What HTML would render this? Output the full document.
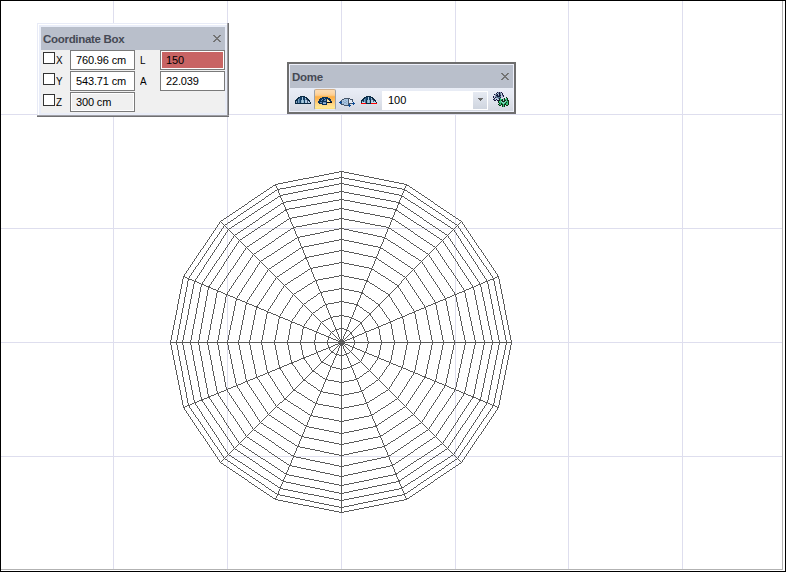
<!DOCTYPE html>
<html><head><meta charset="utf-8"><title>Dome</title>
<style>
html,body{margin:0;padding:0;}
body{width:786px;height:572px;position:relative;overflow:hidden;background:#fff;font-family:"Liberation Sans",sans-serif;font-size:11px;color:#000;}
#frame{position:absolute;left:0;top:0;width:784px;height:570px;border:1px solid #000;}
.g{position:absolute;background:#dedeee;}
.gl{position:absolute;background:#b2b2b2;}
svg{position:absolute;left:0;top:0;}
/* coordinate box */
#cb{position:absolute;left:37px;top:23px;width:192px;height:94px;background:#e8ebf7;}
#cb .b1{position:absolute;left:1px;top:1px;width:189px;height:91px;background:#fff;}
#cb .b2{position:absolute;left:2px;top:2px;width:188px;height:90px;background:#e9edf8;}
#cb .dr{position:absolute;left:190px;top:0;width:2px;height:94px;background:linear-gradient(90deg,#b6b6bd,#585858);}
#cb .db{position:absolute;left:0;top:92px;width:192px;height:2px;background:linear-gradient(180deg,#b6b6bd,#585858);}
#cb .tt{position:absolute;left:4px;top:4px;width:184px;height:23px;background:#b9bfcb;}
#cb .ct{position:absolute;left:4px;top:27px;width:184px;height:63px;background:#f0f0f0;}
.title{position:absolute;font-weight:bold;font-size:11.5px;letter-spacing:-0.3px;color:#454954;white-space:nowrap;line-height:14px;}
.cbx{position:absolute;width:10px;height:10px;border:1px solid #333;background:#fff;}
.lb{position:absolute;white-space:nowrap;line-height:13px;transform:scaleX(0.9);transform-origin:0 0;}
.fd{position:absolute;width:63px;height:18px;border:1px solid #7a7a7a;background:#fff;}
.fd i{position:absolute;left:0;top:0;width:61px;height:16px;border:1px solid #fff;display:block;}
.fd span{position:absolute;left:5px;top:3px;line-height:13px;white-space:nowrap;font-style:normal;letter-spacing:-0.15px;}
/* dome toolbar */
#dm{position:absolute;left:287px;top:62px;width:229px;height:52px;background:#6e6e6e;}
#dm .in{position:absolute;left:2px;top:2px;width:225px;height:48px;background:#eef0fb;}
#dm .tt{position:absolute;left:3px;top:3px;width:223px;height:23px;background:#b9bfcb;}
#dm .tb{position:absolute;left:3px;top:26px;width:223px;height:23px;background:linear-gradient(180deg,#eaeef7 0%,#e2e6ef 45%,#d3d7e0 100%);}
#act{position:absolute;left:27px;top:27px;width:20px;height:19px;border:1px solid #9aa0a8;border-top-color:#d2b08c;border-bottom-color:#e6e8ee;border-radius:2px;background:linear-gradient(180deg,#fcdcb2 0%,#fdd6a4 16%,#fdcc8c 28%,#fdb855 33%,#fdb14a 39%,#fdb958 50%,#fec56c 61%,#ffd987 76%,#ffe793 92%,#ffdd70 100%);}
#combo{position:absolute;left:95px;top:29px;width:106px;height:19px;background:#fff;}
#combo span{position:absolute;left:6px;top:3px;line-height:13px;}
#combo .btn{position:absolute;left:91px;top:1px;width:14px;height:17px;background:linear-gradient(180deg,#e6eaf2,#cfd5df);}
#combo .arr{position:absolute;left:5px;top:6px;width:0;height:0;border-left:3px solid transparent;border-right:3px solid transparent;border-top:3px solid #6a6a6a;}
</style></head><body>
<div id="frame"></div>
<div class="g" style="left:113px;top:1px;width:1px;height:568px"></div><div class="g" style="left:227px;top:1px;width:1px;height:568px"></div><div class="g" style="left:341px;top:1px;width:1px;height:568px"></div><div class="g" style="left:455px;top:1px;width:1px;height:568px"></div><div class="g" style="left:568px;top:1px;width:1px;height:568px"></div><div class="g" style="left:682px;top:1px;width:1px;height:568px"></div><div class="g" style="left:1px;top:114px;width:781px;height:1px"></div><div class="g" style="left:1px;top:228px;width:781px;height:1px"></div><div class="g" style="left:1px;top:342px;width:781px;height:1px"></div><div class="g" style="left:1px;top:456px;width:781px;height:1px"></div>
<div class="gl" style="left:782px;top:1px;width:1px;height:569px"></div>
<div class="gl" style="left:1px;top:569px;width:782px;height:1px"></div>
<svg width="786" height="572" viewBox="0 0 786 572" shape-rendering="crispEdges"><path d="M339 171.5h5M334 172.5h5M344 172.5h5M329 173.5h5M349 173.5h5M324 174.5h5M354 174.5h5M319 175.5h5M359 175.5h5M314 176.5h5M364 176.5h5M309 177.5h5M339 177.5h5M369 177.5h5M303 178.5h6M334 178.5h5M344 178.5h5M374 178.5h5M298 179.5h5M328 179.5h6M349 179.5h6M379 179.5h5M293 180.5h5M323 180.5h5M355 180.5h5M384 180.5h5M288 181.5h5M318 181.5h5M360 181.5h5M389 181.5h5M283 182.5h5M312 182.5h6M365 182.5h5M394 182.5h5M278 183.5h5M307 183.5h5M339 183.5h5M370 183.5h6M399 183.5h5M275 184.5h3M302 184.5h5M334 184.5h5M344 184.5h5M376 184.5h5M404 184.5h3M273 185.5h3M296 185.5h6M329 185.5h5M349 185.5h5M381 185.5h5M406 185.5h3M291 186.5h5M324 186.5h5M354 186.5h5M386 186.5h5M270 187.5h2M286 187.5h5M319 187.5h5M359 187.5h5M391 187.5h6M410 187.5h2M280 188.5h6M314 188.5h5M364 188.5h5M397 188.5h5M267 189.5h2M277 189.5h3M308 189.5h6M369 189.5h5M402 189.5h3M413 189.5h2M275 190.5h2M303 190.5h5M374 190.5h5M404 190.5h3M264 191.5h2M298 191.5h5M339 191.5h5M379 191.5h5M416 191.5h2M272 192.5h2M293 192.5h5M334 192.5h5M344 192.5h5M384 192.5h5M408 192.5h2M261 193.5h2M288 193.5h5M328 193.5h6M349 193.5h5M389 193.5h5M419 193.5h2M269 194.5h2M283 194.5h5M323 194.5h5M354 194.5h6M394 194.5h5M411 194.5h2M258 195.5h2M280 195.5h3M318 195.5h5M360 195.5h5M399 195.5h3M422 195.5h2M266 196.5h2M278 196.5h3M313 196.5h5M365 196.5h5M401 196.5h3M414 196.5h2M255 197.5h2M307 197.5h6M370 197.5h5M425 197.5h2M275 198.5h2M302 198.5h5M375 198.5h5M405 198.5h2M252 199.5h2M262 199.5h2M297 199.5h5M339 199.5h5M380 199.5h6M418 199.5h2M428 199.5h2M272 200.5h2M291 200.5h6M333 200.5h6M344 200.5h6M386 200.5h5M408 200.5h2M249 201.5h2M259 201.5h2M286 201.5h5M328 201.5h5M350 201.5h5M391 201.5h5M421 201.5h2M431 201.5h2M269 202.5h2M283 202.5h3M322 202.5h6M355 202.5h5M396 202.5h4M411 202.5h2M256 203.5h2M281 203.5h3M317 203.5h5M360 203.5h6M398 203.5h3M413 203.5h2M424 203.5h2M245 204.5h2M266 204.5h2M311 204.5h6M366 204.5h5M435 204.5h2M253 205.5h2M264 205.5h2M278 205.5h2M306 205.5h5M371 205.5h6M402 205.5h2M416 205.5h2M427 205.5h2M242 206.5h2M300 206.5h6M377 206.5h5M438 206.5h2M250 207.5h2M261 207.5h2M275 207.5h2M295 207.5h5M382 207.5h5M405 207.5h2M419 207.5h2M430 207.5h2M239 208.5h2M289 208.5h6M339 208.5h5M387 208.5h6M441 208.5h2M247 209.5h2M258 209.5h2M272 209.5h2M285 209.5h4M334 209.5h5M344 209.5h5M393 209.5h4M408 209.5h2M422 209.5h2M433 209.5h2M236 210.5h2M284 210.5h3M329 210.5h5M349 210.5h5M395 210.5h3M444 210.5h2M244 211.5h2M255 211.5h2M269 211.5h2M323 211.5h6M354 211.5h5M411 211.5h2M425 211.5h2M436 211.5h2M233 212.5h2M281 212.5h2M318 212.5h5M359 212.5h5M399 212.5h2M447 212.5h2M241 213.5h2M252 213.5h2M266 213.5h2M313 213.5h5M364 213.5h6M414 213.5h2M428 213.5h2M439 213.5h2M230 214.5h2M278 214.5h2M308 214.5h5M370 214.5h5M402 214.5h2M450 214.5h2M238 215.5h2M249 215.5h2M263 215.5h2M303 215.5h5M375 215.5h5M417 215.5h2M431 215.5h2M442 215.5h2M227 216.5h2M275 216.5h2M297 216.5h6M380 216.5h5M405 216.5h2M453 216.5h2M246 217.5h2M260 217.5h2M292 217.5h5M385 217.5h5M420 217.5h2M434 217.5h2M224 218.5h2M234 218.5h2M272 218.5h2M289 218.5h3M339 218.5h5M390 218.5h3M408 218.5h2M446 218.5h2M456 218.5h2M243 219.5h2M287 219.5h2M334 219.5h5M344 219.5h5M392 219.5h3M437 219.5h2M221 220.5h2M231 220.5h2M256 220.5h2M269 220.5h2M328 220.5h6M349 220.5h6M411 220.5h2M424 220.5h2M439 220.5h2M449 220.5h2M459 220.5h2M240 221.5h2M284 221.5h2M323 221.5h5M355 221.5h5M396 221.5h2M228 222.5h2M238 222.5h2M253 222.5h2M266 222.5h2M318 222.5h5M360 222.5h5M414 222.5h2M427 222.5h2M442 222.5h2M452 222.5h2M281 223.5h2M312 223.5h6M365 223.5h5M399 223.5h2M225 224.5h2M235 224.5h2M250 224.5h2M263 224.5h2M307 224.5h5M370 224.5h5M417 224.5h2M430 224.5h2M445 224.5h2M455 224.5h2M261 225.5h2M278 225.5h2M302 225.5h5M375 225.5h6M402 225.5h2M419 225.5h2M232 226.5h2M247 226.5h2M296 226.5h6M381 226.5h5M433 226.5h2M448 226.5h2M258 227.5h2M275 227.5h2M293 227.5h3M386 227.5h3M405 227.5h2M422 227.5h2M229 228.5h2M244 228.5h2M291 228.5h3M339 228.5h5M388 228.5h3M436 228.5h2M451 228.5h2M255 229.5h2M272 229.5h2M334 229.5h5M344 229.5h5M408 229.5h2M425 229.5h2M241 230.5h2M288 230.5h2M329 230.5h5M349 230.5h4M392 230.5h2M439 230.5h2M252 231.5h2M269 231.5h2M324 231.5h5M353 231.5h5M411 231.5h2M428 231.5h2M238 232.5h2M285 232.5h2M320 232.5h4M358 232.5h5M395 232.5h2M442 232.5h2M249 233.5h2M315 233.5h5M363 233.5h5M431 233.5h2M235 234.5h2M265 234.5h2M282 234.5h2M310 234.5h5M368 234.5h5M398 234.5h2M415 234.5h2M445 234.5h2M246 235.5h2M305 235.5h5M373 235.5h4M434 235.5h2M262 236.5h2M279 236.5h2M300 236.5h5M377 236.5h5M401 236.5h2M418 236.5h2M243 237.5h2M297 237.5h3M382 237.5h3M437 237.5h2M259 238.5h2M276 238.5h2M295 238.5h2M384 238.5h3M404 238.5h2M421 238.5h2M240 239.5h2M339 239.5h5M440 239.5h2M256 240.5h2M292 240.5h2M334 240.5h5M344 240.5h5M388 240.5h2M407 240.5h2M424 240.5h2M272 241.5h2M329 241.5h5M349 241.5h5M253 242.5h2M289 242.5h2M324 242.5h5M354 242.5h5M391 242.5h2M427 242.5h2M269 243.5h2M287 243.5h2M319 243.5h5M359 243.5h4M393 243.5h2M411 243.5h2M250 244.5h2M314 244.5h5M363 244.5h5M430 244.5h2M266 245.5h2M284 245.5h2M309 245.5h5M368 245.5h5M396 245.5h2M414 245.5h2M247 246.5h2M304 246.5h5M373 246.5h5M433 246.5h2M263 247.5h2M281 247.5h2M301 247.5h3M378 247.5h3M399 247.5h2M417 247.5h2M299 248.5h2M380 248.5h3M260 249.5h2M278 249.5h2M402 249.5h2M420 249.5h2M296 250.5h2M339 250.5h5M384 250.5h2M257 251.5h2M275 251.5h2M334 251.5h5M344 251.5h5M405 251.5h2M423 251.5h2M293 252.5h2M329 252.5h5M349 252.5h5M387 252.5h2M254 253.5h2M272 253.5h2M324 253.5h5M354 253.5h5M408 253.5h2M426 253.5h2M290 254.5h2M319 254.5h5M359 254.5h4M390 254.5h2M269 255.5h2M314 255.5h5M363 255.5h5M411 255.5h2M267 256.5h2M287 256.5h2M309 256.5h5M368 256.5h5M393 256.5h2M413 256.5h2M305 257.5h4M373 257.5h4M264 258.5h2M284 258.5h2M304 258.5h3M376 258.5h2M396 258.5h2M416 258.5h2M261 260.5h2M281 260.5h2M301 260.5h2M379 260.5h2M399 260.5h2M419 260.5h2M278 262.5h2M298 262.5h2M339 262.5h5M382 262.5h2M402 262.5h2M334 263.5h5M344 263.5h5M275 264.5h2M295 264.5h2M329 264.5h5M349 264.5h5M385 264.5h2M405 264.5h2M323 265.5h6M354 265.5h5M272 266.5h2M292 266.5h2M318 266.5h5M359 266.5h5M388 266.5h2M408 266.5h2M313 267.5h5M364 267.5h5M269 268.5h2M289 268.5h2M310 268.5h3M369 268.5h3M391 268.5h2M411 268.5h2M308 269.5h2M371 269.5h3M286 270.5h2M394 270.5h2M305 271.5h2M375 271.5h2M283 272.5h2M397 272.5h2M302 273.5h2M378 273.5h2M280 274.5h2M400 274.5h2M299 275.5h2M339 275.5h5M381 275.5h2M183 276.5h2M277 276.5h2M334 276.5h5M344 276.5h5M383 276.5h2M403 276.5h2M497 276.5h2M185 277.5h2M296 277.5h2M329 277.5h5M349 277.5h5M495 277.5h2M187 278.5h2M294 278.5h2M323 278.5h6M354 278.5h5M386 278.5h2M493 278.5h2M188 279.5h4M318 279.5h5M359 279.5h5M490 279.5h4M192 280.5h2M291 280.5h2M315 280.5h3M364 280.5h4M389 280.5h2M488 280.5h2M194 281.5h3M313 281.5h2M366 281.5h3M485 281.5h3M197 282.5h2M288 282.5h2M392 282.5h2M483 282.5h2M199 283.5h2M310 283.5h2M370 283.5h2M481 283.5h2M201 284.5h3M285 284.5h2M308 284.5h2M372 284.5h2M395 284.5h2M478 284.5h3M204 285.5h2M397 285.5h2M476 285.5h2M206 286.5h4M305 286.5h2M375 286.5h2M397 286.5h2M474 286.5h2M208 287.5h3M471 287.5h3M211 288.5h2M302 288.5h2M339 288.5h5M378 288.5h2M469 288.5h2M213 289.5h3M334 289.5h5M344 289.5h5M466 289.5h3M216 290.5h2M299 290.5h2M328 290.5h6M349 290.5h5M381 290.5h2M464 290.5h2M217 291.5h4M297 291.5h2M323 291.5h5M354 291.5h5M383 291.5h2M462 291.5h3M221 292.5h2M320 292.5h3M359 292.5h4M459 292.5h3M223 293.5h2M294 293.5h2M318 293.5h2M361 293.5h3M386 293.5h2M457 293.5h2M225 294.5h3M388 294.5h2M454 294.5h3M228 295.5h2M388 295.5h2M452 295.5h2M230 296.5h3M314 296.5h2M366 296.5h2M450 296.5h2M233 297.5h2M447 297.5h3M235 298.5h2M311 298.5h2M369 298.5h2M445 298.5h2M236 299.5h4M443 299.5h3M240 300.5h2M308 300.5h2M372 300.5h2M440 300.5h3M242 301.5h3M339 301.5h5M438 301.5h2M245 302.5h2M334 302.5h5M344 302.5h5M435 302.5h3M246 303.5h3M304 303.5h2M328 303.5h6M349 303.5h5M376 303.5h2M433 303.5h3M249 304.5h3M325 304.5h3M354 304.5h4M378 304.5h2M431 304.5h2M252 305.5h2M323 305.5h2M356 305.5h3M378 305.5h2M428 305.5h3M254 306.5h4M426 306.5h2M256 307.5h3M320 307.5h2M360 307.5h2M424 307.5h2M259 308.5h2M421 308.5h3M261 309.5h3M419 309.5h2M264 310.5h2M316 310.5h2M364 310.5h2M416 310.5h3M266 311.5h2M414 311.5h2M267 312.5h4M313 312.5h2M367 312.5h2M412 312.5h3M271 313.5h2M369 313.5h2M409 313.5h3M273 314.5h3M369 314.5h2M407 314.5h2M276 315.5h2M339 315.5h5M405 315.5h2M278 316.5h2M333 316.5h6M344 316.5h5M402 316.5h3M279 317.5h4M330 317.5h3M349 317.5h3M400 317.5h3M283 318.5h2M328 318.5h2M351 318.5h3M397 318.5h3M285 319.5h3M326 319.5h2M354 319.5h2M395 319.5h2M288 320.5h2M324 320.5h2M356 320.5h2M393 320.5h2M290 321.5h2M322 321.5h2M358 321.5h2M390 321.5h3M291 322.5h4M360 322.5h2M388 322.5h3M295 323.5h2M360 323.5h2M386 323.5h2M297 324.5h3M383 324.5h3M300 325.5h2M381 325.5h2M302 326.5h2M378 326.5h3M303 327.5h4M376 327.5h3M307 328.5h2M339 328.5h5M374 328.5h2M309 329.5h3M335 329.5h4M344 329.5h3M371 329.5h3M312 330.5h2M346 330.5h3M369 330.5h2M314 331.5h3M332 331.5h2M365 331.5h4M316 332.5h3M350 332.5h2M364 332.5h2M319 333.5h2M350 333.5h2M362 333.5h2M321 334.5h3M359 334.5h3M324 335.5h2M357 335.5h2M326 336.5h3M355 336.5h2M328 337.5h3M352 337.5h3M331 338.5h2M350 338.5h2M333 339.5h3M340 339.5h3M347 339.5h3M336 340.5h2M339 340.5h5M345 340.5h2M338 341.5h7M170 342.5h342M338 343.5h7M335 344.5h3M339 344.5h5M345 344.5h3M333 345.5h2M340 345.5h3M348 345.5h2M331 346.5h2M350 346.5h2M328 347.5h3M352 347.5h3M326 348.5h2M355 348.5h2M323 349.5h3M357 349.5h3M321 350.5h2M360 350.5h2M318 351.5h3M331 351.5h2M362 351.5h2M316 352.5h2M331 352.5h3M364 352.5h3M314 353.5h2M346 353.5h3M367 353.5h2M311 354.5h3M335 354.5h4M344 354.5h3M369 354.5h3M309 355.5h2M339 355.5h5M372 355.5h2M306 356.5h3M374 356.5h3M303 357.5h3M377 357.5h2M301 358.5h4M379 358.5h2M299 359.5h2M381 359.5h3M297 360.5h2M384 360.5h2M294 361.5h3M321 361.5h2M386 361.5h3M291 362.5h3M321 362.5h3M358 362.5h2M389 362.5h2M289 363.5h4M324 363.5h2M356 363.5h2M391 363.5h2M287 364.5h2M326 364.5h2M354 364.5h2M393 364.5h3M284 365.5h3M328 365.5h2M351 365.5h3M396 365.5h2M282 366.5h2M330 366.5h2M350 366.5h2M398 366.5h3M279 367.5h3M332 367.5h4M347 367.5h3M401 367.5h2M277 368.5h4M336 368.5h4M343 368.5h4M403 368.5h3M275 369.5h2M340 369.5h3M406 369.5h2M272 370.5h3M312 370.5h2M408 370.5h2M270 371.5h2M312 371.5h3M367 371.5h2M410 371.5h3M267 372.5h3M413 372.5h2M265 373.5h2M316 373.5h2M364 373.5h2M415 373.5h3M263 374.5h2M418 374.5h2M260 375.5h3M420 375.5h2M258 376.5h2M320 376.5h2M360 376.5h2M422 376.5h4M255 377.5h3M424 377.5h3M253 378.5h2M323 378.5h2M356 378.5h3M427 378.5h3M250 379.5h3M303 379.5h2M325 379.5h3M354 379.5h3M430 379.5h2M248 380.5h2M303 380.5h3M328 380.5h6M349 380.5h5M376 380.5h2M432 380.5h2M245 381.5h3M334 381.5h5M344 381.5h5M434 381.5h3M243 382.5h2M339 382.5h5M437 382.5h2M241 383.5h2M308 383.5h2M372 383.5h2M439 383.5h3M238 384.5h3M442 384.5h2M236 385.5h2M311 385.5h2M369 385.5h2M444 385.5h3M233 386.5h3M447 386.5h2M231 387.5h2M314 387.5h2M366 387.5h2M449 387.5h2M228 388.5h3M451 388.5h3M226 389.5h2M293 389.5h2M454 389.5h2M224 390.5h2M293 390.5h3M318 390.5h2M361 390.5h3M386 390.5h2M456 390.5h3M221 391.5h3M320 391.5h3M359 391.5h3M459 391.5h2M219 392.5h2M297 392.5h2M323 392.5h5M354 392.5h5M383 392.5h2M461 392.5h2M216 393.5h3M299 393.5h2M328 393.5h6M349 393.5h5M381 393.5h2M463 393.5h3M214 394.5h2M334 394.5h5M344 394.5h5M466 394.5h2M211 395.5h3M302 395.5h2M339 395.5h5M378 395.5h2M468 395.5h3M208 396.5h3M471 396.5h3M207 397.5h3M305 397.5h2M375 397.5h2M472 397.5h4M204 398.5h3M284 398.5h2M476 398.5h2M201 399.5h3M284 399.5h3M308 399.5h2M372 399.5h2M395 399.5h2M478 399.5h3M199 400.5h4M310 400.5h2M370 400.5h2M479 400.5h4M197 401.5h2M288 401.5h2M392 401.5h2M483 401.5h2M194 402.5h3M280 402.5h2M313 402.5h2M366 402.5h3M485 402.5h3M192 403.5h2M291 403.5h2M315 403.5h3M364 403.5h3M389 403.5h2M488 403.5h2M190 404.5h2M318 404.5h5M359 404.5h5M490 404.5h2M187 405.5h3M294 405.5h2M323 405.5h6M354 405.5h5M386 405.5h2M492 405.5h3M185 406.5h2M296 406.5h2M329 406.5h5M349 406.5h5M495 406.5h2M183 407.5h2M277 407.5h2M334 407.5h5M344 407.5h5M383 407.5h2M403 407.5h2M497 407.5h2M299 408.5h2M339 408.5h5M381 408.5h2M280 409.5h2M400 409.5h2M302 410.5h2M378 410.5h2M283 411.5h2M397 411.5h2M305 412.5h2M375 412.5h2M286 413.5h2M394 413.5h2M308 414.5h2M371 414.5h3M269 415.5h2M289 415.5h2M310 415.5h3M369 415.5h3M391 415.5h2M411 415.5h2M313 416.5h5M364 416.5h5M272 417.5h2M292 417.5h2M318 417.5h5M359 417.5h5M388 417.5h2M408 417.5h2M323 418.5h6M354 418.5h5M275 419.5h2M295 419.5h2M329 419.5h5M349 419.5h5M385 419.5h2M405 419.5h2M334 420.5h5M344 420.5h5M278 421.5h2M298 421.5h2M339 421.5h5M382 421.5h2M402 421.5h2M261 423.5h2M281 423.5h2M301 423.5h2M379 423.5h2M399 423.5h2M419 423.5h2M264 425.5h2M284 425.5h2M304 425.5h3M375 425.5h3M396 425.5h2M416 425.5h2M306 426.5h3M373 426.5h4M267 427.5h2M287 427.5h2M309 427.5h5M368 427.5h5M393 427.5h2M413 427.5h2M269 428.5h2M314 428.5h5M363 428.5h5M411 428.5h2M290 429.5h2M319 429.5h5M359 429.5h4M390 429.5h2M254 430.5h2M272 430.5h2M324 430.5h5M354 430.5h5M408 430.5h2M426 430.5h2M293 431.5h2M329 431.5h5M349 431.5h5M387 431.5h2M257 432.5h2M275 432.5h2M334 432.5h5M344 432.5h5M405 432.5h2M423 432.5h2M296 433.5h2M339 433.5h5M384 433.5h2M260 434.5h2M278 434.5h2M402 434.5h2M420 434.5h2M299 435.5h2M380 435.5h3M263 436.5h2M281 436.5h2M301 436.5h3M378 436.5h3M399 436.5h2M417 436.5h2M247 437.5h2M304 437.5h5M373 437.5h5M433 437.5h2M266 438.5h2M284 438.5h2M309 438.5h5M368 438.5h5M396 438.5h2M414 438.5h2M250 439.5h2M314 439.5h5M363 439.5h5M430 439.5h2M269 440.5h2M287 440.5h2M319 440.5h5M359 440.5h4M393 440.5h2M411 440.5h2M253 441.5h2M289 441.5h2M324 441.5h5M354 441.5h5M391 441.5h2M427 441.5h2M272 442.5h2M329 442.5h5M349 442.5h5M256 443.5h2M292 443.5h2M334 443.5h5M344 443.5h5M388 443.5h2M407 443.5h2M424 443.5h2M240 444.5h2M339 444.5h5M440 444.5h2M259 445.5h2M276 445.5h2M295 445.5h2M384 445.5h3M404 445.5h2M421 445.5h2M243 446.5h2M297 446.5h3M382 446.5h3M437 446.5h2M262 447.5h2M279 447.5h2M300 447.5h5M377 447.5h5M401 447.5h2M418 447.5h2M246 448.5h2M305 448.5h5M373 448.5h4M434 448.5h2M235 449.5h2M265 449.5h2M282 449.5h2M310 449.5h5M368 449.5h5M398 449.5h2M415 449.5h2M445 449.5h2M249 450.5h2M315 450.5h5M363 450.5h5M431 450.5h2M238 451.5h2M285 451.5h2M320 451.5h4M358 451.5h5M395 451.5h2M442 451.5h2M252 452.5h2M269 452.5h2M324 452.5h5M353 452.5h5M411 452.5h2M428 452.5h2M241 453.5h2M288 453.5h2M329 453.5h5M349 453.5h4M392 453.5h2M439 453.5h2M255 454.5h2M272 454.5h2M334 454.5h5M344 454.5h5M408 454.5h2M425 454.5h2M229 455.5h2M244 455.5h2M291 455.5h3M339 455.5h5M388 455.5h3M436 455.5h2M451 455.5h2M258 456.5h2M275 456.5h2M293 456.5h3M386 456.5h3M405 456.5h2M422 456.5h2M232 457.5h2M247 457.5h2M296 457.5h5M381 457.5h5M433 457.5h2M448 457.5h2M261 458.5h2M278 458.5h2M301 458.5h5M377 458.5h4M402 458.5h2M419 458.5h2M225 459.5h2M235 459.5h2M250 459.5h2M263 459.5h2M306 459.5h4M372 459.5h5M417 459.5h2M430 459.5h2M445 459.5h2M455 459.5h2M281 460.5h2M310 460.5h5M367 460.5h5M399 460.5h2M228 461.5h2M238 461.5h2M253 461.5h2M266 461.5h2M315 461.5h5M363 461.5h4M414 461.5h2M427 461.5h2M442 461.5h2M452 461.5h2M240 462.5h2M284 462.5h2M320 462.5h5M358 462.5h5M396 462.5h2M221 463.5h2M231 463.5h2M256 463.5h2M269 463.5h2M325 463.5h5M353 463.5h5M411 463.5h2M424 463.5h2M439 463.5h2M449 463.5h2M459 463.5h2M243 464.5h2M287 464.5h2M330 464.5h4M349 464.5h4M392 464.5h3M437 464.5h2M224 465.5h2M234 465.5h2M272 465.5h2M289 465.5h3M334 465.5h5M344 465.5h5M390 465.5h3M408 465.5h2M446 465.5h2M456 465.5h2M246 466.5h2M260 466.5h2M292 466.5h5M339 466.5h5M386 466.5h4M420 466.5h2M434 466.5h2M227 467.5h2M275 467.5h2M297 467.5h4M381 467.5h5M405 467.5h2M453 467.5h2M238 468.5h2M249 468.5h2M263 468.5h2M301 468.5h5M376 468.5h5M417 468.5h2M431 468.5h2M442 468.5h2M230 469.5h2M278 469.5h2M306 469.5h5M372 469.5h4M402 469.5h2M450 469.5h2M241 470.5h2M252 470.5h2M266 470.5h2M311 470.5h5M367 470.5h5M414 470.5h2M428 470.5h2M439 470.5h2M233 471.5h2M281 471.5h2M316 471.5h4M362 471.5h5M399 471.5h2M447 471.5h2M244 472.5h2M255 472.5h2M269 472.5h2M320 472.5h5M358 472.5h4M411 472.5h2M425 472.5h2M436 472.5h2M236 473.5h2M284 473.5h3M325 473.5h5M353 473.5h5M395 473.5h3M444 473.5h2M247 474.5h2M258 474.5h2M272 474.5h2M286 474.5h3M330 474.5h4M348 474.5h5M393 474.5h4M408 474.5h2M422 474.5h2M433 474.5h2M239 475.5h2M289 475.5h5M334 475.5h5M344 475.5h4M388 475.5h5M441 475.5h2M250 476.5h2M261 476.5h2M275 476.5h2M294 476.5h5M339 476.5h5M383 476.5h5M405 476.5h2M419 476.5h2M430 476.5h2M242 477.5h2M299 477.5h5M378 477.5h5M438 477.5h2M253 478.5h2M264 478.5h2M278 478.5h2M304 478.5h5M373 478.5h5M402 478.5h2M416 478.5h2M427 478.5h2M245 479.5h2M266 479.5h2M309 479.5h5M369 479.5h4M435 479.5h2M256 480.5h2M281 480.5h3M314 480.5h5M364 480.5h5M398 480.5h3M413 480.5h2M424 480.5h2M269 481.5h2M283 481.5h3M319 481.5h5M359 481.5h5M396 481.5h4M411 481.5h2M249 482.5h2M259 482.5h2M286 482.5h5M324 482.5h5M354 482.5h5M391 482.5h5M421 482.5h2M431 482.5h2M272 483.5h2M291 483.5h5M329 483.5h5M349 483.5h5M387 483.5h4M408 483.5h2M252 484.5h2M262 484.5h2M296 484.5h4M334 484.5h5M344 484.5h5M382 484.5h5M418 484.5h2M428 484.5h2M275 485.5h2M300 485.5h5M339 485.5h5M377 485.5h5M405 485.5h2M255 486.5h2M305 486.5h5M372 486.5h5M425 486.5h2M266 487.5h2M278 487.5h3M310 487.5h5M368 487.5h4M401 487.5h3M414 487.5h2M258 488.5h2M280 488.5h3M315 488.5h5M363 488.5h5M399 488.5h3M422 488.5h2M269 489.5h2M283 489.5h5M320 489.5h5M358 489.5h5M394 489.5h5M411 489.5h2M261 490.5h2M288 490.5h5M325 490.5h4M353 490.5h5M389 490.5h5M419 490.5h2M272 491.5h2M293 491.5h5M329 491.5h5M349 491.5h4M384 491.5h5M408 491.5h2M264 492.5h2M298 492.5h5M334 492.5h5M344 492.5h5M379 492.5h5M416 492.5h2M275 493.5h2M303 493.5h5M339 493.5h5M374 493.5h5M404 493.5h3M267 494.5h2M277 494.5h3M308 494.5h6M369 494.5h5M402 494.5h3M413 494.5h2M280 495.5h5M314 495.5h5M364 495.5h5M397 495.5h5M270 496.5h2M285 496.5h5M319 496.5h5M359 496.5h5M392 496.5h5M410 496.5h2M290 497.5h5M324 497.5h5M354 497.5h5M388 497.5h4M273 498.5h3M295 498.5h5M329 498.5h5M349 498.5h5M383 498.5h5M406 498.5h3M275 499.5h3M300 499.5h5M334 499.5h5M344 499.5h5M378 499.5h5M404 499.5h3M278 500.5h5M305 500.5h5M339 500.5h5M373 500.5h5M399 500.5h5M283 501.5h5M310 501.5h4M368 501.5h5M394 501.5h5M288 502.5h5M314 502.5h5M363 502.5h5M389 502.5h5M293 503.5h5M319 503.5h5M358 503.5h5M384 503.5h5M298 504.5h5M324 504.5h5M354 504.5h4M379 504.5h5M303 505.5h6M329 505.5h5M349 505.5h5M374 505.5h5M309 506.5h5M334 506.5h5M344 506.5h5M369 506.5h5M314 507.5h5M339 507.5h5M364 507.5h5M319 508.5h5M359 508.5h5M324 509.5h5M354 509.5h5M329 510.5h5M349 510.5h5M334 511.5h5M344 511.5h5M339 512.5h5M170.5 340v2M170.5 343v2M171.5 335v5M171.5 345v5M172.5 330v5M172.5 350v5M173.5 325v5M173.5 355v5M174.5 320v5M174.5 360v5M175.5 315v5M175.5 365v5M176.5 310v5M176.5 340v2M176.5 343v2M176.5 370v5M177.5 304v6M177.5 335v5M177.5 345v5M177.5 375v5M178.5 299v5M178.5 329v6M178.5 350v6M178.5 380v5M179.5 294v5M179.5 324v5M179.5 356v5M179.5 385v5M180.5 289v5M180.5 319v5M180.5 361v5M180.5 390v5M181.5 284v5M181.5 313v6M181.5 366v5M181.5 395v5M182.5 279v5M182.5 308v5M182.5 340v2M182.5 343v2M182.5 371v6M182.5 400v5M183.5 277v2M183.5 303v5M183.5 335v5M183.5 345v5M183.5 377v5M183.5 405v2M184.5 274v2M184.5 297v6M184.5 330v5M184.5 350v5M184.5 382v5M184.5 408v2M185.5 273v1M185.5 292v5M185.5 325v5M185.5 355v5M185.5 387v5M185.5 410v1M186.5 271v2M186.5 287v5M186.5 320v5M186.5 360v5M186.5 392v6M186.5 411v2M187.5 270v1M187.5 281v6M187.5 315v5M187.5 365v5M187.5 398v5M187.5 413v1M188.5 268v2M188.5 280v1M188.5 309v6M188.5 370v5M188.5 403v2M188.5 414v2M189.5 267v1M189.5 276v2M189.5 304v5M189.5 375v5M189.5 406v2M189.5 416v1M190.5 265v2M190.5 275v1M190.5 299v5M190.5 340v2M190.5 343v2M190.5 380v5M190.5 408v1M190.5 417v2M191.5 264v1M191.5 273v2M191.5 294v5M191.5 335v5M191.5 345v5M191.5 385v5M191.5 409v2M191.5 419v1M192.5 262v2M192.5 272v1M192.5 289v5M192.5 329v6M192.5 350v5M192.5 390v5M192.5 411v1M192.5 420v2M193.5 261v1M193.5 270v2M193.5 284v5M193.5 324v5M193.5 355v6M193.5 395v5M193.5 412v2M193.5 422v1M194.5 259v2M194.5 269v1M194.5 282v2M194.5 319v5M194.5 361v5M194.5 400v2M194.5 414v1M194.5 423v2M195.5 258v1M195.5 267v2M195.5 279v2M195.5 314v5M195.5 366v5M195.5 403v2M195.5 415v2M195.5 425v1M196.5 256v2M196.5 266v1M196.5 278v1M196.5 308v6M196.5 371v5M196.5 405v1M196.5 417v1M196.5 426v2M197.5 255v1M197.5 265v1M197.5 276v2M197.5 303v5M197.5 376v5M197.5 406v2M197.5 418v1M197.5 428v1M198.5 253v2M198.5 263v2M198.5 275v1M198.5 298v5M198.5 340v2M198.5 343v2M198.5 381v6M198.5 408v1M198.5 419v2M198.5 429v2M199.5 252v1M199.5 262v1M199.5 273v2M199.5 292v6M199.5 334v6M199.5 345v6M199.5 387v5M199.5 409v2M199.5 421v1M199.5 431v1M200.5 250v2M200.5 260v2M200.5 272v1M200.5 287v5M200.5 329v5M200.5 351v5M200.5 392v5M200.5 411v1M200.5 422v2M200.5 432v2M201.5 249v1M201.5 259v1M201.5 270v2M201.5 285v2M201.5 323v6M201.5 356v5M201.5 397v2M201.5 412v2M201.5 424v1M201.5 434v1M202.5 248v1M202.5 257v2M202.5 269v1M202.5 282v2M202.5 318v5M202.5 361v6M202.5 401v1M202.5 414v2M202.5 425v2M202.5 435v1M203.5 246v2M203.5 256v1M203.5 267v2M203.5 281v1M203.5 312v6M203.5 367v5M203.5 402v1M203.5 416v1M203.5 427v1M203.5 436v2M204.5 245v1M204.5 254v2M204.5 265v2M204.5 279v2M204.5 307v5M204.5 372v6M204.5 403v2M204.5 417v2M204.5 428v2M204.5 438v1M205.5 243v2M205.5 253v1M205.5 264v1M205.5 278v1M205.5 301v6M205.5 378v5M205.5 405v1M205.5 419v1M205.5 430v1M205.5 439v2M206.5 242v1M206.5 251v2M206.5 262v2M206.5 276v2M206.5 296v5M206.5 383v5M206.5 406v2M206.5 420v2M206.5 431v2M206.5 441v1M207.5 240v2M207.5 250v1M207.5 261v1M207.5 275v1M207.5 290v6M207.5 340v2M207.5 343v2M207.5 388v6M207.5 408v1M207.5 422v1M207.5 433v1M207.5 442v2M208.5 239v1M208.5 248v2M208.5 259v2M208.5 273v2M208.5 288v2M208.5 335v5M208.5 345v5M208.5 394v2M208.5 409v2M208.5 423v2M208.5 434v2M208.5 444v1M209.5 237v2M209.5 247v1M209.5 258v1M209.5 272v1M209.5 285v1M209.5 330v5M209.5 350v5M209.5 398v1M209.5 411v1M209.5 425v1M209.5 436v1M209.5 445v2M210.5 236v1M210.5 245v2M210.5 256v2M210.5 270v2M210.5 284v1M210.5 324v6M210.5 355v5M210.5 399v1M210.5 412v2M210.5 426v2M210.5 437v2M210.5 447v1M211.5 234v2M211.5 244v1M211.5 255v1M211.5 269v1M211.5 282v2M211.5 319v5M211.5 360v5M211.5 400v2M211.5 414v1M211.5 428v1M211.5 439v1M211.5 448v2M212.5 233v1M212.5 242v2M212.5 253v2M212.5 267v2M212.5 281v1M212.5 314v5M212.5 365v6M212.5 402v1M212.5 415v2M212.5 429v2M212.5 440v2M212.5 450v1M213.5 231v2M213.5 241v1M213.5 252v1M213.5 266v1M213.5 279v2M213.5 309v5M213.5 371v5M213.5 403v2M213.5 417v1M213.5 431v1M213.5 442v1M213.5 451v2M214.5 230v1M214.5 239v2M214.5 250v2M214.5 264v2M214.5 278v1M214.5 304v5M214.5 376v5M214.5 405v1M214.5 418v2M214.5 432v2M214.5 443v2M214.5 453v1M215.5 228v2M215.5 238v1M215.5 249v1M215.5 263v1M215.5 276v2M215.5 298v6M215.5 381v5M215.5 406v2M215.5 420v1M215.5 434v1M215.5 445v1M215.5 454v2M216.5 227v1M216.5 237v1M216.5 247v2M216.5 261v2M216.5 275v1M216.5 293v5M216.5 386v5M216.5 408v1M216.5 421v2M216.5 435v2M216.5 446v1M216.5 456v1M217.5 225v2M217.5 235v2M217.5 246v1M217.5 260v1M217.5 273v2M217.5 292v1M217.5 340v2M217.5 343v2M217.5 391v2M217.5 409v2M217.5 423v1M217.5 437v1M217.5 447v2M217.5 457v2M218.5 224v1M218.5 234v1M218.5 244v2M218.5 259v1M218.5 272v1M218.5 288v2M218.5 335v5M218.5 345v5M218.5 394v2M218.5 411v1M218.5 424v1M218.5 438v2M218.5 449v1M218.5 459v1M219.5 222v2M219.5 232v2M219.5 243v1M219.5 257v2M219.5 270v2M219.5 287v1M219.5 329v6M219.5 350v6M219.5 396v1M219.5 412v2M219.5 425v2M219.5 440v2M219.5 450v2M219.5 460v2M220.5 221v1M220.5 231v1M220.5 241v2M220.5 256v1M220.5 269v1M220.5 285v2M220.5 324v5M220.5 356v5M220.5 397v2M220.5 414v1M220.5 427v1M220.5 442v1M220.5 452v1M220.5 462v1M221.5 222v1M221.5 229v2M221.5 239v2M221.5 254v2M221.5 267v2M221.5 284v1M221.5 319v5M221.5 361v5M221.5 399v1M221.5 415v2M221.5 428v2M221.5 443v2M221.5 453v2M221.5 461v1M222.5 223v1M222.5 228v1M222.5 238v1M222.5 253v1M222.5 266v1M222.5 282v2M222.5 313v6M222.5 366v5M222.5 400v2M222.5 417v1M222.5 430v1M222.5 445v1M222.5 455v1M222.5 460v1M223.5 219v1M223.5 224v1M223.5 226v2M223.5 236v2M223.5 251v2M223.5 264v2M223.5 281v1M223.5 308v5M223.5 371v5M223.5 402v1M223.5 418v2M223.5 431v2M223.5 446v2M223.5 456v2M223.5 459v1M223.5 464v1M224.5 225v1M224.5 235v1M224.5 250v1M224.5 262v2M224.5 279v2M224.5 303v5M224.5 376v6M224.5 403v2M224.5 420v2M224.5 433v1M224.5 448v1M224.5 458v1M225.5 226v1M225.5 233v2M225.5 248v2M225.5 261v1M225.5 278v1M225.5 297v6M225.5 382v5M225.5 405v1M225.5 422v1M225.5 434v2M225.5 449v2M225.5 457v1M226.5 217v1M226.5 227v1M226.5 232v1M226.5 247v1M226.5 259v2M226.5 276v2M226.5 295v2M226.5 387v2M226.5 406v2M226.5 423v2M226.5 436v1M226.5 451v1M226.5 456v1M226.5 466v1M227.5 223v1M227.5 228v1M227.5 230v2M227.5 245v2M227.5 258v1M227.5 275v1M227.5 292v2M227.5 340v2M227.5 343v2M227.5 390v2M227.5 408v1M227.5 425v1M227.5 437v2M227.5 452v2M227.5 455v1M227.5 460v1M228.5 229v1M228.5 244v1M228.5 256v2M228.5 273v2M228.5 291v1M228.5 335v5M228.5 345v5M228.5 392v1M228.5 409v2M228.5 426v2M228.5 439v1M228.5 454v1M229.5 215v1M229.5 230v1M229.5 242v2M229.5 255v1M229.5 272v1M229.5 289v2M229.5 330v5M229.5 350v4M229.5 393v2M229.5 411v1M229.5 428v1M229.5 440v2M229.5 453v1M229.5 468v1M230.5 221v1M230.5 231v1M230.5 241v1M230.5 253v2M230.5 270v2M230.5 288v1M230.5 325v5M230.5 354v5M230.5 395v1M230.5 412v2M230.5 429v2M230.5 442v1M230.5 452v1M230.5 462v1M231.5 227v1M231.5 232v1M231.5 239v2M231.5 252v1M231.5 269v1M231.5 286v2M231.5 321v4M231.5 359v5M231.5 396v2M231.5 414v1M231.5 431v1M231.5 443v2M231.5 451v1M231.5 456v1M232.5 213v1M232.5 233v1M232.5 238v1M232.5 250v2M232.5 268v1M232.5 285v1M232.5 316v5M232.5 364v5M232.5 398v1M232.5 415v1M232.5 432v2M232.5 445v1M232.5 450v1M232.5 470v1M233.5 219v1M233.5 234v1M233.5 236v2M233.5 249v1M233.5 266v2M233.5 283v2M233.5 311v5M233.5 369v5M233.5 399v2M233.5 416v2M233.5 434v1M233.5 446v2M233.5 449v1M233.5 464v1M234.5 225v1M234.5 235v1M234.5 247v2M234.5 265v1M234.5 282v1M234.5 306v5M234.5 374v4M234.5 401v1M234.5 418v1M234.5 435v2M234.5 448v1M234.5 458v1M235.5 211v1M235.5 236v1M235.5 246v1M235.5 263v2M235.5 280v2M235.5 301v5M235.5 378v5M235.5 402v2M235.5 419v2M235.5 437v1M235.5 447v1M235.5 472v1M236.5 217v1M236.5 237v1M236.5 244v2M236.5 262v1M236.5 279v1M236.5 300v1M236.5 383v2M236.5 404v1M236.5 421v1M236.5 438v2M236.5 446v1M236.5 466v1M237.5 216v1M237.5 223v1M237.5 233v1M237.5 238v1M237.5 243v1M237.5 260v2M237.5 277v2M237.5 296v2M237.5 386v2M237.5 405v2M237.5 422v2M237.5 440v1M237.5 445v1M237.5 450v1M237.5 460v1M237.5 467v1M238.5 209v1M238.5 239v1M238.5 241v2M238.5 259v1M238.5 276v1M238.5 295v1M238.5 340v2M238.5 343v2M238.5 388v1M238.5 407v1M238.5 424v1M238.5 441v2M238.5 444v1M238.5 474v1M239.5 240v1M239.5 257v2M239.5 275v1M239.5 293v2M239.5 335v5M239.5 345v5M239.5 389v2M239.5 408v2M239.5 425v2M239.5 443v1M240.5 214v1M240.5 231v1M240.5 241v1M240.5 256v1M240.5 273v2M240.5 292v1M240.5 330v5M240.5 350v5M240.5 391v1M240.5 410v1M240.5 427v1M240.5 442v1M240.5 452v1M240.5 469v1M241.5 207v1M241.5 242v1M241.5 254v2M241.5 272v1M241.5 290v2M241.5 325v5M241.5 355v5M241.5 392v2M241.5 411v1M241.5 428v2M241.5 441v1M241.5 476v1M242.5 220v1M242.5 238v1M242.5 243v1M242.5 253v1M242.5 270v2M242.5 288v2M242.5 320v5M242.5 360v4M242.5 394v2M242.5 412v2M242.5 430v1M242.5 440v1M242.5 445v1M242.5 463v1M243.5 212v1M243.5 229v1M243.5 244v1M243.5 251v2M243.5 269v1M243.5 287v1M243.5 315v5M243.5 364v5M243.5 396v1M243.5 414v1M243.5 431v2M243.5 439v1M243.5 454v1M243.5 471v1M244.5 205v1M244.5 245v1M244.5 250v1M244.5 267v2M244.5 285v2M244.5 310v5M244.5 369v5M244.5 397v2M244.5 415v2M244.5 433v1M244.5 438v1M244.5 478v1M245.5 218v1M245.5 236v1M245.5 246v1M245.5 248v2M245.5 266v1M245.5 284v1M245.5 305v5M245.5 374v5M245.5 399v1M245.5 417v1M245.5 434v2M245.5 437v1M245.5 447v1M245.5 465v1M246.5 210v1M246.5 227v1M246.5 247v1M246.5 264v2M246.5 282v2M246.5 304v1M246.5 379v2M246.5 400v2M246.5 418v2M246.5 436v1M246.5 456v1M246.5 473v1M247.5 203v1M247.5 248v1M247.5 263v1M247.5 281v1M247.5 300v2M247.5 382v2M247.5 402v1M247.5 420v1M247.5 435v1M247.5 480v1M248.5 202v1M248.5 216v1M248.5 234v1M248.5 249v1M248.5 261v2M248.5 279v2M248.5 299v1M248.5 384v1M248.5 403v2M248.5 421v2M248.5 434v1M248.5 449v1M248.5 467v1M248.5 481v1M249.5 208v1M249.5 225v1M249.5 245v1M249.5 250v1M249.5 260v1M249.5 278v1M249.5 297v2M249.5 340v2M249.5 343v2M249.5 385v2M249.5 405v1M249.5 423v1M249.5 433v1M249.5 438v1M249.5 458v1M249.5 475v1M250.5 251v1M250.5 258v2M250.5 276v2M250.5 296v1M250.5 335v5M250.5 345v5M250.5 387v1M250.5 406v2M250.5 424v2M250.5 432v1M251.5 200v1M251.5 214v1M251.5 232v1M251.5 252v1M251.5 257v1M251.5 275v1M251.5 294v2M251.5 330v5M251.5 350v5M251.5 388v2M251.5 408v1M251.5 426v1M251.5 431v1M251.5 451v1M251.5 469v1M251.5 483v1M252.5 206v1M252.5 223v1M252.5 243v1M252.5 253v1M252.5 255v2M252.5 273v2M252.5 293v1M252.5 325v5M252.5 355v5M252.5 390v1M252.5 409v2M252.5 427v2M252.5 430v1M252.5 440v1M252.5 460v1M252.5 477v1M253.5 254v1M253.5 272v1M253.5 291v2M253.5 320v5M253.5 360v4M253.5 391v2M253.5 411v1M253.5 429v1M254.5 198v1M254.5 212v1M254.5 230v1M254.5 255v1M254.5 270v2M254.5 290v1M254.5 315v5M254.5 364v5M254.5 393v1M254.5 412v2M254.5 428v1M254.5 453v1M254.5 471v1M254.5 485v1M255.5 204v1M255.5 221v1M255.5 241v1M255.5 256v1M255.5 268v2M255.5 288v2M255.5 310v5M255.5 369v5M255.5 394v2M255.5 414v2M255.5 427v1M255.5 442v1M255.5 462v1M255.5 479v1M256.5 252v1M256.5 257v1M256.5 267v1M256.5 287v1M256.5 308v2M256.5 374v3M256.5 396v1M256.5 416v1M256.5 426v1M256.5 431v1M257.5 196v1M257.5 210v1M257.5 228v1M257.5 258v1M257.5 265v2M257.5 285v2M257.5 305v1M257.5 378v1M257.5 397v2M257.5 417v2M257.5 425v1M257.5 455v1M257.5 473v1M257.5 487v1M258.5 202v1M258.5 219v1M258.5 239v1M258.5 259v1M258.5 264v1M258.5 284v1M258.5 304v1M258.5 379v1M258.5 399v1M258.5 419v1M258.5 424v1M258.5 444v1M258.5 464v1M258.5 481v1M259.5 218v1M259.5 250v1M259.5 260v1M259.5 262v2M259.5 282v2M259.5 302v2M259.5 380v2M259.5 400v2M259.5 420v2M259.5 423v1M259.5 433v1M259.5 465v1M260.5 194v1M260.5 208v1M260.5 226v1M260.5 261v1M260.5 281v1M260.5 301v1M260.5 382v1M260.5 402v1M260.5 422v1M260.5 457v1M260.5 475v1M260.5 489v1M261.5 200v1M261.5 237v1M261.5 262v1M261.5 279v2M261.5 299v2M261.5 340v2M261.5 343v2M261.5 383v2M261.5 403v2M261.5 421v1M261.5 446v1M261.5 483v1M262.5 216v1M262.5 248v1M262.5 263v1M262.5 278v1M262.5 298v1M262.5 335v5M262.5 345v5M262.5 385v1M262.5 405v1M262.5 420v1M262.5 435v1M262.5 467v1M263.5 192v1M263.5 206v1M263.5 259v1M263.5 264v1M263.5 276v2M263.5 296v2M263.5 330v5M263.5 350v5M263.5 386v2M263.5 406v2M263.5 419v1M263.5 424v1M263.5 477v1M263.5 491v1M264.5 198v1M264.5 235v1M264.5 265v1M264.5 275v1M264.5 295v1M264.5 324v6M264.5 355v5M264.5 388v1M264.5 408v1M264.5 418v1M264.5 448v1M264.5 485v1M265.5 197v1M265.5 214v1M265.5 223v1M265.5 246v1M265.5 266v1M265.5 273v2M265.5 293v2M265.5 319v5M265.5 360v5M265.5 389v2M265.5 409v2M265.5 417v1M265.5 437v1M265.5 460v1M265.5 469v1M265.5 486v1M266.5 190v1M266.5 257v1M266.5 267v1M266.5 272v1M266.5 292v1M266.5 314v5M266.5 365v5M266.5 391v1M266.5 411v1M266.5 416v1M266.5 426v1M266.5 493v1M267.5 233v1M267.5 268v1M267.5 270v2M267.5 290v2M267.5 313v1M267.5 370v2M267.5 392v2M267.5 412v2M267.5 415v1M267.5 450v1M268.5 195v1M268.5 203v1M268.5 212v1M268.5 221v1M268.5 232v1M268.5 244v1M268.5 269v1M268.5 289v1M268.5 309v2M268.5 373v2M268.5 394v1M268.5 414v1M268.5 439v1M268.5 451v1M268.5 462v1M268.5 471v1M268.5 480v1M268.5 488v1M269.5 188v1M269.5 270v1M269.5 287v2M269.5 308v1M269.5 375v1M269.5 395v2M269.5 413v1M269.5 495v1M270.5 271v1M270.5 286v1M270.5 306v2M270.5 376v2M270.5 397v1M270.5 412v1M271.5 193v1M271.5 201v1M271.5 210v1M271.5 219v1M271.5 230v1M271.5 242v1M271.5 254v1M271.5 267v1M271.5 272v1M271.5 284v2M271.5 305v1M271.5 378v1M271.5 398v2M271.5 411v1M271.5 416v1M271.5 429v1M271.5 441v1M271.5 453v1M271.5 464v1M271.5 473v1M271.5 482v1M271.5 490v1M272.5 186v1M272.5 273v1M272.5 283v1M272.5 303v2M272.5 379v2M272.5 400v1M272.5 410v1M272.5 497v1M273.5 274v1M273.5 281v2M273.5 302v1M273.5 381v1M273.5 401v2M273.5 409v1M274.5 191v1M274.5 199v1M274.5 208v1M274.5 217v1M274.5 228v1M274.5 240v1M274.5 252v1M274.5 265v1M274.5 275v1M274.5 280v1M274.5 300v2M274.5 340v2M274.5 343v2M274.5 382v2M274.5 403v1M274.5 408v1M274.5 418v1M274.5 431v1M274.5 443v1M274.5 455v1M274.5 466v1M274.5 475v1M274.5 484v1M274.5 492v1M275.5 239v1M275.5 276v1M275.5 278v2M275.5 299v1M275.5 335v5M275.5 345v5M275.5 384v2M275.5 404v2M275.5 407v1M275.5 444v1M276.5 186v2M276.5 277v1M276.5 297v2M276.5 330v5M276.5 350v5M276.5 386v1M276.5 406v1M276.5 496v2M277.5 188v1M277.5 197v1M277.5 206v1M277.5 215v1M277.5 226v1M277.5 250v1M277.5 263v1M277.5 278v1M277.5 295v2M277.5 324v6M277.5 355v5M277.5 387v2M277.5 405v1M277.5 420v1M277.5 433v1M277.5 457v1M277.5 468v1M277.5 477v1M277.5 486v1M277.5 495v1M278.5 190v3M278.5 237v1M278.5 279v1M278.5 294v1M278.5 319v5M278.5 360v5M278.5 389v1M278.5 404v1M278.5 446v1M278.5 491v3M279.5 193v2M279.5 275v1M279.5 280v1M279.5 292v2M279.5 318v1M279.5 365v2M279.5 390v2M279.5 403v1M279.5 408v1M279.5 489v2M280.5 197v1M280.5 204v1M280.5 213v1M280.5 224v1M280.5 248v1M280.5 261v1M280.5 281v1M280.5 291v1M280.5 314v2M280.5 369v1M280.5 392v1M280.5 422v1M280.5 435v1M280.5 459v1M280.5 470v1M280.5 479v1M280.5 486v1M281.5 198v2M281.5 235v1M281.5 282v1M281.5 289v2M281.5 313v1M281.5 370v1M281.5 393v2M281.5 448v1M281.5 484v2M282.5 200v2M282.5 273v1M282.5 283v1M282.5 288v1M282.5 311v2M282.5 371v2M282.5 395v1M282.5 401v1M282.5 410v1M282.5 482v2M283.5 204v1M283.5 211v1M283.5 222v1M283.5 246v1M283.5 259v1M283.5 284v1M283.5 286v2M283.5 309v2M283.5 373v2M283.5 396v2M283.5 400v1M283.5 424v1M283.5 437v1M283.5 461v1M283.5 472v1M283.5 479v1M284.5 205v2M284.5 233v1M284.5 285v1M284.5 308v1M284.5 375v1M284.5 450v1M284.5 477v2M285.5 207v2M285.5 271v1M285.5 286v1M285.5 306v2M285.5 376v2M285.5 412v1M285.5 475v2M286.5 211v1M286.5 220v1M286.5 244v1M286.5 257v1M286.5 287v1M286.5 305v1M286.5 378v1M286.5 397v1M286.5 426v1M286.5 439v1M286.5 463v1M286.5 472v1M287.5 212v2M287.5 231v1M287.5 283v1M287.5 288v1M287.5 303v2M287.5 340v2M287.5 343v2M287.5 379v2M287.5 396v1M287.5 400v1M287.5 452v1M287.5 470v2M288.5 214v3M288.5 269v1M288.5 289v1M288.5 302v1M288.5 335v5M288.5 345v5M288.5 381v1M288.5 395v1M288.5 414v1M288.5 467v3M289.5 217v1M289.5 255v1M289.5 290v1M289.5 300v2M289.5 329v6M289.5 350v5M289.5 382v2M289.5 394v1M289.5 428v1M289.5 466v1M290.5 219v3M290.5 229v1M290.5 281v1M290.5 291v1M290.5 298v2M290.5 324v5M290.5 355v5M290.5 384v2M290.5 393v1M290.5 402v1M290.5 454v1M290.5 463v2M291.5 222v2M291.5 241v1M291.5 267v1M291.5 292v1M291.5 297v1M291.5 323v1M291.5 360v2M291.5 386v1M291.5 392v1M291.5 416v1M291.5 442v1M291.5 460v3M292.5 224v2M292.5 253v1M292.5 293v1M292.5 295v2M292.5 319v2M292.5 364v1M292.5 387v2M292.5 391v1M292.5 430v1M292.5 458v2M293.5 226v1M293.5 279v1M293.5 294v1M293.5 318v1M293.5 365v1M293.5 404v1M293.5 457v1M294.5 229v2M294.5 239v1M294.5 265v1M294.5 295v1M294.5 317v1M294.5 366v1M294.5 418v1M294.5 444v1M294.5 453v2M295.5 231v3M295.5 251v1M295.5 296v1M295.5 315v2M295.5 367v2M295.5 388v1M295.5 432v1M295.5 451v2M296.5 234v2M296.5 292v1M296.5 297v1M296.5 314v1M296.5 369v1M296.5 387v1M296.5 391v1M296.5 448v3M297.5 236v1M297.5 263v1M297.5 298v1M297.5 312v2M297.5 370v2M297.5 386v1M297.5 420v1M297.5 447v1M298.5 238v3M298.5 249v1M298.5 276v1M298.5 299v1M298.5 311v1M298.5 372v1M298.5 385v1M298.5 407v1M298.5 434v1M298.5 444v2M299.5 241v2M299.5 300v1M299.5 309v2M299.5 373v2M299.5 384v1M299.5 441v3M300.5 243v3M300.5 261v1M300.5 301v1M300.5 308v1M300.5 340v2M300.5 343v2M300.5 375v1M300.5 383v1M300.5 422v1M300.5 439v2M301.5 246v1M301.5 274v1M301.5 289v1M301.5 302v1M301.5 307v1M301.5 335v5M301.5 345v5M301.5 376v1M301.5 382v1M301.5 394v1M301.5 409v1M301.5 437v2M302.5 248v2M302.5 303v1M302.5 305v2M302.5 329v6M302.5 350v5M302.5 377v2M302.5 381v1M302.5 434v2M303.5 250v3M303.5 259v1M303.5 304v1M303.5 328v1M303.5 355v2M303.5 424v1M303.5 432v2M304.5 253v2M304.5 272v1M304.5 287v1M304.5 305v1M304.5 324v2M304.5 359v1M304.5 396v1M304.5 411v1M304.5 429v3M305.5 255v2M305.5 306v1M305.5 323v1M305.5 360v1M305.5 378v1M305.5 427v2M306.5 259v1M306.5 302v1M306.5 307v1M306.5 321v2M306.5 361v2M306.5 377v1M306.5 381v1M307.5 260v2M307.5 270v1M307.5 285v1M307.5 301v1M307.5 308v1M307.5 320v1M307.5 363v1M307.5 376v1M307.5 382v1M307.5 398v1M307.5 413v1M307.5 422v3M308.5 262v3M308.5 309v1M308.5 319v1M308.5 364v1M308.5 375v1M308.5 420v2M309.5 265v2M309.5 310v1M309.5 317v2M309.5 365v2M309.5 374v1M309.5 417v3M310.5 267v1M310.5 299v1M310.5 311v1M310.5 316v1M310.5 367v1M310.5 373v1M310.5 384v1M310.5 416v1M311.5 269v3M311.5 312v1M311.5 314v2M311.5 368v2M311.5 372v1M311.5 413v2M312.5 272v2M312.5 282v1M312.5 313v1M312.5 401v1M312.5 410v3M313.5 274v3M313.5 297v1M313.5 314v1M313.5 386v1M313.5 408v2M314.5 277v2M314.5 315v1M314.5 340v2M314.5 343v2M314.5 369v1M314.5 406v2M315.5 279v1M315.5 311v1M315.5 316v1M315.5 334v6M315.5 345v5M315.5 368v1M315.5 372v1M315.5 404v2M316.5 281v3M316.5 295v1M316.5 317v1M316.5 333v1M316.5 350v2M316.5 367v1M316.5 388v1M316.5 401v2M317.5 284v2M317.5 294v1M317.5 318v1M317.5 329v2M317.5 353v2M317.5 366v1M317.5 389v1M317.5 398v3M318.5 286v3M318.5 309v1M318.5 319v1M318.5 327v2M318.5 355v2M318.5 365v1M318.5 374v1M318.5 396v2M319.5 289v2M319.5 308v1M319.5 320v1M319.5 325v2M319.5 357v2M319.5 364v1M319.5 375v1M319.5 394v2M320.5 291v1M320.5 321v1M320.5 323v2M320.5 359v2M320.5 363v1M320.5 392v2M321.5 293v3M321.5 322v1M321.5 389v2M322.5 296v2M322.5 306v1M322.5 323v1M322.5 377v1M322.5 387v2M323.5 298v3M323.5 324v1M323.5 360v1M323.5 384v3M324.5 301v2M324.5 325v1M324.5 359v1M324.5 382v2M325.5 303v1M325.5 326v1M325.5 358v1M325.5 380v2M326.5 305v3M326.5 327v1M326.5 357v1M326.5 377v2M327.5 308v2M327.5 328v1M327.5 340v2M327.5 343v2M327.5 356v1M327.5 375v2M328.5 310v3M328.5 329v1M328.5 338v2M328.5 345v2M328.5 355v1M328.5 372v3M329.5 313v2M329.5 330v1M329.5 335v1M329.5 348v2M329.5 354v1M329.5 370v2M330.5 315v2M330.5 331v1M330.5 333v2M330.5 350v1M330.5 353v1M330.5 367v3M331.5 318v2M331.5 332v1M331.5 365v1M332.5 320v2M332.5 333v1M332.5 363v2M333.5 322v3M333.5 334v1M333.5 350v1M333.5 360v3M334.5 325v2M334.5 330v1M334.5 335v1M334.5 349v1M334.5 353v1M334.5 358v2M335.5 327v2M335.5 336v1M335.5 348v1M335.5 356v2M336.5 330v2M336.5 337v1M336.5 347v1M336.5 353v1M336.5 355v1M337.5 332v2M337.5 338v1M337.5 346v1M337.5 351v2M338.5 334v3M338.5 339v1M338.5 345v1M338.5 348v3M339.5 337v2M339.5 346v2M341.5 172v5M341.5 178v5M341.5 184v7M341.5 192v7M341.5 200v8M341.5 209v9M341.5 219v9M341.5 229v10M341.5 240v10M341.5 251v11M341.5 263v12M341.5 276v12M341.5 289v12M341.5 302v13M341.5 316v12M341.5 329v10M341.5 346v9M341.5 356v13M341.5 370v12M341.5 383v12M341.5 396v12M341.5 409v12M341.5 422v11M341.5 434v10M341.5 445v10M341.5 456v10M341.5 467v9M341.5 477v8M341.5 486v7M341.5 494v6M341.5 501v6M341.5 508v4M343.5 336v3M343.5 346v3M344.5 334v2M344.5 339v1M344.5 345v1M344.5 349v2M345.5 332v2M345.5 338v1M345.5 346v1M345.5 351v2M346.5 331v1M346.5 337v1M346.5 347v1M346.5 355v1M347.5 327v2M347.5 336v1M347.5 348v1M347.5 356v2M348.5 324v3M348.5 335v1M348.5 349v1M348.5 358v3M349.5 322v2M349.5 331v1M349.5 334v1M349.5 350v1M349.5 352v1M349.5 361v2M350.5 319v3M350.5 351v1M350.5 363v2M351.5 334v1M351.5 350v1M351.5 352v1M351.5 367v1M352.5 315v2M352.5 331v1M352.5 335v1M352.5 348v2M352.5 353v1M352.5 368v2M353.5 312v3M353.5 330v1M353.5 336v1M353.5 338v2M353.5 345v2M353.5 354v1M353.5 370v3M354.5 310v2M354.5 329v1M354.5 340v2M354.5 343v2M354.5 355v1M354.5 373v2M355.5 307v3M355.5 328v1M355.5 356v1M355.5 375v3M356.5 306v1M356.5 327v1M356.5 357v1M357.5 302v2M357.5 326v1M357.5 358v1M357.5 380v2M358.5 300v2M358.5 325v1M358.5 359v1M358.5 382v3M359.5 298v2M359.5 306v1M359.5 324v1M359.5 360v1M359.5 377v1M359.5 385v2M360.5 295v3M360.5 361v1M360.5 387v3M361.5 294v1M361.5 324v1M361.5 359v2M361.5 362v1M362.5 290v2M362.5 308v1M362.5 321v1M362.5 325v2M362.5 357v2M362.5 363v1M362.5 375v1M362.5 392v2M363.5 288v2M363.5 309v1M363.5 320v1M363.5 327v2M363.5 355v2M363.5 364v1M363.5 374v1M363.5 394v3M364.5 285v3M364.5 294v1M364.5 319v1M364.5 329v2M364.5 353v2M364.5 365v1M364.5 389v1M364.5 397v2M365.5 283v2M365.5 295v1M365.5 318v1M365.5 351v1M365.5 366v1M365.5 388v1M365.5 399v3M366.5 282v1M366.5 311v1M366.5 317v1M366.5 333v4M366.5 348v3M366.5 367v1M366.5 372v1M367.5 278v2M367.5 316v1M367.5 337v4M367.5 344v4M367.5 368v1M367.5 404v3M368.5 276v2M368.5 297v1M368.5 315v1M368.5 341v1M368.5 343v1M368.5 369v1M368.5 386v1M368.5 407v2M369.5 273v3M369.5 282v1M369.5 370v1M369.5 401v1M369.5 409v2M370.5 271v2M370.5 315v1M370.5 368v2M370.5 371v1M370.5 411v3M371.5 270v1M371.5 299v1M371.5 312v1M371.5 316v1M371.5 367v1M371.5 372v1M371.5 384v1M372.5 266v2M372.5 311v1M372.5 317v2M372.5 365v2M372.5 373v1M372.5 416v3M373.5 264v2M373.5 310v1M373.5 319v1M373.5 364v1M373.5 374v1M373.5 419v2M374.5 261v3M374.5 270v1M374.5 285v1M374.5 301v1M374.5 309v1M374.5 320v1M374.5 363v1M374.5 375v1M374.5 382v1M374.5 398v1M374.5 413v1M374.5 421v2M375.5 259v2M375.5 302v1M375.5 308v1M375.5 321v2M375.5 361v2M375.5 376v1M375.5 381v1M375.5 423v2M376.5 256v1M376.5 307v1M376.5 323v1M376.5 360v1M376.5 377v1M376.5 427v1M377.5 254v2M377.5 272v1M377.5 287v1M377.5 306v1M377.5 324v2M377.5 358v2M377.5 378v1M377.5 396v1M377.5 411v1M377.5 428v3M378.5 251v3M378.5 259v1M378.5 328v1M378.5 355v2M378.5 379v1M378.5 424v1M378.5 431v2M379.5 249v2M379.5 306v1M379.5 329v6M379.5 350v5M379.5 377v2M379.5 380v1M379.5 433v2M380.5 246v1M380.5 274v1M380.5 289v1M380.5 303v1M380.5 307v1M380.5 335v5M380.5 345v5M380.5 376v1M380.5 381v1M380.5 394v1M380.5 409v1M380.5 437v1M381.5 244v2M381.5 261v1M381.5 302v1M381.5 308v1M381.5 340v2M381.5 343v2M381.5 375v1M381.5 382v1M381.5 422v1M381.5 438v2M382.5 242v2M382.5 301v1M382.5 309v2M382.5 373v2M382.5 383v1M382.5 440v3M383.5 239v3M383.5 249v1M383.5 300v1M383.5 311v1M383.5 372v1M383.5 384v1M383.5 434v1M383.5 443v2M384.5 263v1M384.5 299v1M384.5 312v2M384.5 370v2M384.5 385v1M384.5 420v1M384.5 447v1M385.5 234v3M385.5 277v1M385.5 292v1M385.5 298v1M385.5 314v1M385.5 369v1M385.5 386v1M385.5 391v1M385.5 406v1M385.5 448v2M386.5 232v2M386.5 251v1M386.5 297v1M386.5 315v2M386.5 367v2M386.5 387v1M386.5 432v1M386.5 450v2M387.5 229v3M387.5 239v1M387.5 265v1M387.5 296v1M387.5 317v1M387.5 366v1M387.5 388v1M387.5 418v1M387.5 444v1M387.5 452v3M388.5 279v1M388.5 318v1M388.5 365v1M388.5 389v1M388.5 404v1M389.5 225v2M389.5 253v1M389.5 296v1M389.5 319v2M389.5 363v2M389.5 387v2M389.5 390v1M389.5 430v1M389.5 457v3M390.5 222v3M390.5 241v1M390.5 267v1M390.5 293v1M390.5 297v1M390.5 323v1M390.5 360v2M390.5 386v1M390.5 391v1M390.5 416v1M390.5 442v1M390.5 460v2M391.5 220v2M391.5 229v1M391.5 281v1M391.5 292v1M391.5 298v2M391.5 324v5M391.5 355v5M391.5 384v2M391.5 392v1M391.5 402v1M391.5 454v1M391.5 462v2M392.5 217v1M392.5 255v1M392.5 291v1M392.5 300v2M392.5 329v6M392.5 350v5M392.5 382v2M392.5 393v1M392.5 428v1M392.5 466v1M393.5 215v2M393.5 269v1M393.5 290v1M393.5 302v1M393.5 335v5M393.5 345v5M393.5 381v1M393.5 394v1M393.5 414v1M393.5 467v2M394.5 212v3M394.5 231v1M394.5 283v1M394.5 289v1M394.5 303v2M394.5 340v2M394.5 343v2M394.5 379v2M394.5 395v1M394.5 400v1M394.5 452v1M394.5 469v3M395.5 211v1M395.5 220v1M395.5 244v1M395.5 257v1M395.5 288v1M395.5 305v1M395.5 378v1M395.5 396v1M395.5 426v1M395.5 439v1M395.5 463v1M395.5 472v1M396.5 208v1M396.5 271v1M396.5 287v1M396.5 306v2M396.5 376v2M396.5 397v1M396.5 412v1M396.5 475v2M397.5 205v3M397.5 233v1M397.5 308v1M397.5 375v1M397.5 398v1M397.5 450v1M397.5 477v2M398.5 204v1M398.5 211v1M398.5 222v1M398.5 246v1M398.5 259v1M398.5 287v1M398.5 309v2M398.5 373v2M398.5 396v2M398.5 399v1M398.5 424v1M398.5 437v1M398.5 461v1M398.5 472v1M398.5 479v1M399.5 200v2M399.5 273v1M399.5 284v1M399.5 288v1M399.5 311v2M399.5 371v2M399.5 395v1M399.5 400v1M399.5 410v1M399.5 482v2M400.5 198v2M400.5 235v1M400.5 283v1M400.5 289v2M400.5 313v1M400.5 370v1M400.5 393v2M400.5 401v1M400.5 448v1M400.5 484v2M401.5 197v1M401.5 204v1M401.5 213v1M401.5 224v1M401.5 248v1M401.5 261v1M401.5 281v2M401.5 291v1M401.5 314v2M401.5 368v2M401.5 392v1M401.5 402v1M401.5 422v1M401.5 435v1M401.5 459v1M401.5 470v1M401.5 479v1M401.5 486v1M402.5 193v2M402.5 275v1M402.5 280v1M402.5 292v2M402.5 318v1M402.5 365v2M402.5 390v2M402.5 403v1M402.5 408v1M402.5 489v2M403.5 191v2M403.5 237v1M403.5 279v1M403.5 294v1M403.5 319v5M403.5 360v5M403.5 389v1M403.5 404v1M403.5 446v1M403.5 491v2M404.5 188v1M404.5 197v1M404.5 206v1M404.5 215v1M404.5 226v1M404.5 250v1M404.5 263v1M404.5 278v1M404.5 295v2M404.5 324v6M404.5 355v5M404.5 387v2M404.5 405v1M404.5 420v1M404.5 433v1M404.5 457v1M404.5 468v1M404.5 477v1M404.5 486v1M404.5 495v1M405.5 186v2M405.5 277v1M405.5 297v2M405.5 330v5M405.5 350v5M405.5 386v1M405.5 406v1M405.5 496v2M406.5 239v1M406.5 276v1M406.5 278v2M406.5 299v1M406.5 335v5M406.5 345v5M406.5 384v2M406.5 404v2M406.5 407v1M406.5 444v1M407.5 191v1M407.5 199v1M407.5 208v1M407.5 217v1M407.5 228v1M407.5 252v1M407.5 265v1M407.5 275v1M407.5 280v1M407.5 300v2M407.5 340v2M407.5 343v2M407.5 382v2M407.5 403v1M407.5 408v1M407.5 418v1M407.5 431v1M407.5 455v1M407.5 466v1M407.5 475v1M407.5 484v1M407.5 492v1M408.5 274v1M408.5 281v2M408.5 302v1M408.5 381v1M408.5 401v2M408.5 409v1M409.5 186v1M409.5 241v1M409.5 273v1M409.5 283v1M409.5 303v2M409.5 379v2M409.5 400v1M409.5 410v1M409.5 442v1M409.5 497v1M410.5 193v1M410.5 201v1M410.5 210v1M410.5 219v1M410.5 230v1M410.5 242v1M410.5 254v1M410.5 267v1M410.5 272v1M410.5 284v2M410.5 305v1M410.5 378v1M410.5 398v2M410.5 411v1M410.5 416v1M410.5 429v1M410.5 441v1M410.5 453v1M410.5 464v1M410.5 473v1M410.5 482v1M410.5 490v1M411.5 271v1M411.5 286v1M411.5 306v2M411.5 376v2M411.5 397v1M411.5 412v1M412.5 188v1M412.5 270v1M412.5 287v2M412.5 308v1M412.5 375v1M412.5 395v2M412.5 413v1M412.5 495v1M413.5 195v1M413.5 212v1M413.5 221v1M413.5 232v1M413.5 244v1M413.5 269v1M413.5 289v1M413.5 309v2M413.5 373v2M413.5 394v1M413.5 414v1M413.5 439v1M413.5 451v1M413.5 462v1M413.5 471v1M413.5 488v1M414.5 233v1M414.5 268v1M414.5 270v2M414.5 290v2M414.5 313v1M414.5 370v2M414.5 392v2M414.5 412v2M414.5 415v1M414.5 450v1M415.5 190v1M415.5 204v1M415.5 257v1M415.5 267v1M415.5 272v1M415.5 292v1M415.5 314v5M415.5 365v5M415.5 391v1M415.5 411v1M415.5 416v1M415.5 426v1M415.5 479v1M415.5 493v1M416.5 197v1M416.5 214v1M416.5 223v1M416.5 246v1M416.5 266v1M416.5 273v2M416.5 293v2M416.5 319v5M416.5 360v5M416.5 389v2M416.5 409v2M416.5 417v1M416.5 437v1M416.5 460v1M416.5 469v1M416.5 486v1M417.5 198v1M417.5 235v1M417.5 265v1M417.5 275v1M417.5 295v1M417.5 324v6M417.5 355v5M417.5 388v1M417.5 408v1M417.5 418v1M417.5 448v1M417.5 485v1M418.5 192v1M418.5 206v1M418.5 259v1M418.5 264v1M418.5 276v2M418.5 296v2M418.5 330v5M418.5 350v5M418.5 386v2M418.5 406v2M418.5 419v1M418.5 424v1M418.5 477v1M418.5 491v1M419.5 216v1M419.5 248v1M419.5 263v1M419.5 278v1M419.5 298v1M419.5 335v5M419.5 345v5M419.5 385v1M419.5 405v1M419.5 420v1M419.5 435v1M419.5 467v1M420.5 200v1M420.5 237v1M420.5 262v1M420.5 279v2M420.5 299v2M420.5 340v2M420.5 343v2M420.5 383v2M420.5 403v2M420.5 421v1M420.5 446v1M420.5 483v1M421.5 194v1M421.5 208v1M421.5 226v1M421.5 261v1M421.5 281v1M421.5 301v1M421.5 382v1M421.5 402v1M421.5 422v1M421.5 457v1M421.5 475v1M421.5 489v1M422.5 218v1M422.5 250v1M422.5 260v1M422.5 262v2M422.5 282v2M422.5 302v2M422.5 380v2M422.5 400v2M422.5 420v2M422.5 423v1M422.5 433v1M422.5 465v1M423.5 202v1M423.5 219v1M423.5 239v1M423.5 259v1M423.5 264v1M423.5 284v1M423.5 304v1M423.5 379v1M423.5 399v1M423.5 419v1M423.5 424v1M423.5 444v1M423.5 464v1M423.5 481v1M424.5 196v1M424.5 210v1M424.5 228v1M424.5 258v1M424.5 265v2M424.5 285v2M424.5 305v2M424.5 378v1M424.5 397v2M424.5 417v2M424.5 425v1M424.5 455v1M424.5 473v1M424.5 487v1M425.5 252v1M425.5 257v1M425.5 267v1M425.5 287v1M425.5 308v2M425.5 374v2M425.5 396v1M425.5 416v1M425.5 426v1M425.5 431v1M426.5 204v1M426.5 221v1M426.5 241v1M426.5 256v1M426.5 268v2M426.5 288v2M426.5 310v5M426.5 369v5M426.5 394v2M426.5 414v2M426.5 427v1M426.5 442v1M426.5 462v1M426.5 479v1M427.5 198v1M427.5 212v1M427.5 230v1M427.5 255v1M427.5 270v2M427.5 290v1M427.5 315v5M427.5 364v5M427.5 393v1M427.5 412v2M427.5 428v1M427.5 453v1M427.5 471v1M427.5 485v1M428.5 254v1M428.5 272v1M428.5 291v2M428.5 320v5M428.5 360v4M428.5 391v2M428.5 411v1M428.5 429v1M429.5 206v1M429.5 223v1M429.5 243v1M429.5 253v1M429.5 255v2M429.5 273v2M429.5 293v1M429.5 325v5M429.5 355v5M429.5 390v1M429.5 409v2M429.5 427v2M429.5 430v1M429.5 440v1M429.5 460v1M429.5 477v1M430.5 200v1M430.5 214v1M430.5 232v1M430.5 252v1M430.5 257v1M430.5 275v1M430.5 294v2M430.5 330v5M430.5 350v5M430.5 388v2M430.5 408v1M430.5 426v1M430.5 431v1M430.5 451v1M430.5 469v1M430.5 483v1M431.5 251v1M431.5 258v2M431.5 276v2M431.5 296v1M431.5 335v5M431.5 345v5M431.5 387v1M431.5 406v2M431.5 424v2M431.5 432v1M432.5 208v1M432.5 225v1M432.5 245v1M432.5 250v1M432.5 260v1M432.5 278v1M432.5 297v2M432.5 340v2M432.5 343v2M432.5 385v2M432.5 405v1M432.5 423v1M432.5 433v1M432.5 438v1M432.5 458v1M432.5 475v1M433.5 202v1M433.5 216v1M433.5 234v1M433.5 249v1M433.5 261v2M433.5 279v2M433.5 299v1M433.5 384v1M433.5 403v2M433.5 421v2M433.5 434v1M433.5 449v1M433.5 467v1M433.5 481v1M434.5 203v1M434.5 248v1M434.5 263v1M434.5 281v1M434.5 300v2M434.5 382v2M434.5 402v1M434.5 420v1M434.5 435v1M434.5 480v1M435.5 210v1M435.5 227v1M435.5 247v1M435.5 264v2M435.5 282v2M435.5 304v1M435.5 379v2M435.5 400v2M435.5 418v2M435.5 436v1M435.5 456v1M435.5 473v1M436.5 218v1M436.5 236v1M436.5 246v1M436.5 248v2M436.5 266v1M436.5 284v1M436.5 305v5M436.5 374v5M436.5 399v1M436.5 417v1M436.5 434v2M436.5 437v1M436.5 447v1M436.5 465v1M437.5 205v1M437.5 245v1M437.5 250v1M437.5 267v2M437.5 285v2M437.5 310v5M437.5 369v5M437.5 397v2M437.5 415v2M437.5 433v1M437.5 438v1M437.5 478v1M438.5 212v1M438.5 229v1M438.5 244v1M438.5 251v2M438.5 269v1M438.5 287v1M438.5 315v5M438.5 364v5M438.5 396v1M438.5 414v1M438.5 431v2M438.5 439v1M438.5 454v1M438.5 471v1M439.5 238v1M439.5 243v1M439.5 253v1M439.5 270v2M439.5 288v2M439.5 320v5M439.5 360v4M439.5 394v2M439.5 412v2M439.5 430v1M439.5 440v1M439.5 445v1M440.5 207v1M440.5 242v1M440.5 254v2M440.5 272v1M440.5 290v2M440.5 325v5M440.5 355v5M440.5 392v2M440.5 411v1M440.5 428v2M440.5 441v1M440.5 476v1M441.5 214v1M441.5 221v1M441.5 231v1M441.5 241v1M441.5 256v1M441.5 273v2M441.5 292v1M441.5 330v5M441.5 350v5M441.5 391v1M441.5 410v1M441.5 427v1M441.5 442v1M441.5 452v1M441.5 462v1M441.5 469v1M442.5 240v1M442.5 257v2M442.5 275v1M442.5 293v2M442.5 335v5M442.5 345v5M442.5 389v2M442.5 408v2M442.5 425v2M442.5 443v1M443.5 209v1M443.5 239v1M443.5 241v2M443.5 259v1M443.5 276v1M443.5 295v1M443.5 340v2M443.5 343v2M443.5 388v1M443.5 407v1M443.5 424v1M443.5 441v2M443.5 444v1M443.5 474v1M444.5 216v1M444.5 223v1M444.5 233v1M444.5 238v1M444.5 243v1M444.5 260v2M444.5 277v2M444.5 296v2M444.5 386v2M444.5 405v2M444.5 422v2M444.5 440v1M444.5 445v1M444.5 450v1M444.5 460v1M444.5 467v1M445.5 217v1M445.5 237v1M445.5 244v2M445.5 262v1M445.5 279v1M445.5 300v1M445.5 383v2M445.5 404v1M445.5 421v1M445.5 438v2M445.5 446v1M445.5 466v1M446.5 211v1M446.5 236v1M446.5 246v1M446.5 263v2M446.5 280v2M446.5 301v5M446.5 378v5M446.5 402v2M446.5 419v2M446.5 437v1M446.5 447v1M446.5 472v1M447.5 225v1M447.5 235v1M447.5 247v2M447.5 265v1M447.5 282v1M447.5 306v5M447.5 374v4M447.5 401v1M447.5 418v1M447.5 435v2M447.5 448v1M447.5 458v1M448.5 219v1M448.5 234v1M448.5 236v2M448.5 249v1M448.5 266v2M448.5 283v2M448.5 311v5M448.5 369v5M448.5 399v2M448.5 416v2M448.5 434v1M448.5 446v2M448.5 449v1M448.5 464v1M449.5 213v1M449.5 233v1M449.5 238v1M449.5 250v2M449.5 268v1M449.5 285v1M449.5 316v5M449.5 364v5M449.5 398v1M449.5 415v1M449.5 432v2M449.5 445v1M449.5 450v1M449.5 470v1M450.5 227v1M450.5 232v1M450.5 239v2M450.5 252v1M450.5 269v1M450.5 286v2M450.5 321v4M450.5 359v5M450.5 396v2M450.5 414v1M450.5 431v1M450.5 443v2M450.5 451v1M450.5 456v1M451.5 221v1M451.5 231v1M451.5 241v1M451.5 253v2M451.5 270v2M451.5 288v1M451.5 325v5M451.5 354v5M451.5 395v1M451.5 412v2M451.5 429v2M451.5 442v1M451.5 452v1M451.5 462v1M452.5 215v1M452.5 230v1M452.5 242v2M452.5 255v1M452.5 272v1M452.5 289v2M452.5 330v5M452.5 350v4M452.5 393v2M452.5 411v1M452.5 428v1M452.5 440v2M452.5 453v1M452.5 468v1M453.5 229v1M453.5 244v1M453.5 256v2M453.5 273v2M453.5 291v1M453.5 335v5M453.5 345v5M453.5 392v1M453.5 409v2M453.5 426v2M453.5 439v1M453.5 454v1M454.5 223v1M454.5 228v1M454.5 230v2M454.5 245v2M454.5 258v1M454.5 275v1M454.5 292v2M454.5 340v2M454.5 343v2M454.5 390v2M454.5 408v1M454.5 425v1M454.5 437v2M454.5 452v2M454.5 455v1M454.5 460v1M455.5 217v1M455.5 227v1M455.5 232v1M455.5 247v1M455.5 259v2M455.5 276v2M455.5 295v2M455.5 387v2M455.5 406v2M455.5 423v2M455.5 436v1M455.5 451v1M455.5 456v1M455.5 466v1M456.5 226v1M456.5 233v2M456.5 248v2M456.5 261v1M456.5 278v1M456.5 297v5M456.5 382v5M456.5 405v1M456.5 422v1M456.5 434v2M456.5 449v2M456.5 457v1M457.5 225v1M457.5 235v1M457.5 250v1M457.5 262v2M457.5 279v2M457.5 302v5M457.5 378v4M457.5 403v2M457.5 420v2M457.5 433v1M457.5 448v1M457.5 458v1M458.5 219v1M458.5 224v1M458.5 226v2M458.5 236v2M458.5 251v2M458.5 264v2M458.5 281v1M458.5 307v4M458.5 373v5M458.5 402v1M458.5 418v2M458.5 431v2M458.5 446v2M458.5 456v2M458.5 459v1M458.5 464v1M459.5 223v1M459.5 228v1M459.5 238v1M459.5 253v1M459.5 266v1M459.5 282v2M459.5 311v5M459.5 368v5M459.5 400v2M459.5 417v1M459.5 430v1M459.5 445v1M459.5 455v1M459.5 460v1M460.5 222v1M460.5 229v2M460.5 239v2M460.5 254v2M460.5 267v2M460.5 284v1M460.5 316v5M460.5 364v4M460.5 399v1M460.5 415v2M460.5 428v2M460.5 443v2M460.5 453v2M460.5 461v1M461.5 221v1M461.5 231v1M461.5 241v2M461.5 256v1M461.5 269v1M461.5 285v2M461.5 321v5M461.5 359v5M461.5 397v2M461.5 414v1M461.5 427v1M461.5 442v1M461.5 452v1M461.5 462v1M462.5 222v2M462.5 232v2M462.5 243v1M462.5 257v2M462.5 270v2M462.5 287v1M462.5 326v5M462.5 354v5M462.5 396v1M462.5 412v2M462.5 425v2M462.5 440v2M462.5 450v2M462.5 460v2M463.5 224v1M463.5 234v1M463.5 244v2M463.5 259v1M463.5 272v1M463.5 288v2M463.5 331v4M463.5 350v4M463.5 394v2M463.5 411v1M463.5 424v1M463.5 438v2M463.5 449v1M463.5 459v1M464.5 225v2M464.5 235v2M464.5 246v1M464.5 260v1M464.5 273v2M464.5 292v1M464.5 335v5M464.5 345v5M464.5 391v2M464.5 409v2M464.5 423v1M464.5 437v1M464.5 447v2M464.5 457v2M465.5 227v1M465.5 237v1M465.5 247v2M465.5 261v2M465.5 275v1M465.5 293v5M465.5 340v2M465.5 343v2M465.5 387v4M465.5 408v1M465.5 421v2M465.5 435v2M465.5 446v1M465.5 456v1M466.5 228v2M466.5 238v1M466.5 249v1M466.5 263v1M466.5 276v2M466.5 298v4M466.5 382v5M466.5 406v2M466.5 420v1M466.5 434v1M466.5 445v1M466.5 454v2M467.5 230v1M467.5 239v2M467.5 250v2M467.5 264v2M467.5 278v1M467.5 302v5M467.5 377v5M467.5 405v1M467.5 418v2M467.5 432v2M467.5 443v2M467.5 453v1M468.5 231v2M468.5 241v1M468.5 252v1M468.5 266v1M468.5 279v2M468.5 307v5M468.5 373v4M468.5 403v2M468.5 417v1M468.5 431v1M468.5 442v1M468.5 451v2M469.5 233v1M469.5 242v2M469.5 253v2M469.5 267v2M469.5 281v1M469.5 312v5M469.5 368v5M469.5 402v1M469.5 415v2M469.5 429v2M469.5 440v2M469.5 450v1M470.5 234v2M470.5 244v1M470.5 255v1M470.5 269v1M470.5 282v2M470.5 317v4M470.5 363v5M470.5 400v2M470.5 414v1M470.5 428v1M470.5 439v1M470.5 448v2M471.5 236v1M471.5 245v2M471.5 256v2M471.5 270v2M471.5 284v1M471.5 321v5M471.5 359v4M471.5 399v1M471.5 412v2M471.5 426v2M471.5 437v2M471.5 447v1M472.5 237v2M472.5 247v1M472.5 258v1M472.5 272v1M472.5 285v2M472.5 326v5M472.5 354v5M472.5 398v1M472.5 411v1M472.5 425v1M472.5 436v1M472.5 445v2M473.5 239v1M473.5 248v2M473.5 259v2M473.5 273v2M473.5 288v2M473.5 331v4M473.5 349v5M473.5 394v2M473.5 409v2M473.5 423v2M473.5 434v2M473.5 444v1M474.5 240v2M474.5 250v1M474.5 261v1M474.5 275v1M474.5 290v5M474.5 335v5M474.5 345v4M474.5 389v5M474.5 408v1M474.5 422v1M474.5 433v1M474.5 442v2M475.5 242v1M475.5 251v2M475.5 262v2M475.5 276v2M475.5 295v5M475.5 340v2M475.5 343v2M475.5 384v5M475.5 406v2M475.5 420v2M475.5 431v2M475.5 441v1M476.5 243v2M476.5 253v1M476.5 264v1M476.5 278v1M476.5 300v5M476.5 379v5M476.5 405v1M476.5 419v1M476.5 430v1M476.5 439v2M477.5 245v1M477.5 254v2M477.5 265v2M477.5 279v2M477.5 305v5M477.5 374v5M477.5 403v2M477.5 417v2M477.5 428v2M477.5 438v1M478.5 246v2M478.5 256v1M478.5 267v2M478.5 281v1M478.5 310v5M478.5 370v4M478.5 402v1M478.5 416v1M478.5 427v1M478.5 436v2M479.5 248v1M479.5 257v2M479.5 269v1M479.5 282v2M479.5 315v5M479.5 365v5M479.5 401v1M479.5 414v2M479.5 425v2M479.5 435v1M480.5 249v1M480.5 259v1M480.5 270v2M480.5 285v2M480.5 320v5M480.5 360v5M480.5 397v2M480.5 412v2M480.5 424v1M480.5 434v1M481.5 250v2M481.5 260v2M481.5 272v1M481.5 287v5M481.5 325v5M481.5 355v5M481.5 392v5M481.5 411v1M481.5 422v2M481.5 432v2M482.5 252v1M482.5 262v1M482.5 273v2M482.5 292v5M482.5 330v5M482.5 350v5M482.5 388v4M482.5 409v2M482.5 421v1M482.5 431v1M483.5 253v2M483.5 263v2M483.5 275v1M483.5 297v4M483.5 335v5M483.5 345v5M483.5 383v5M483.5 408v1M483.5 419v2M483.5 429v2M484.5 255v1M484.5 265v1M484.5 276v2M484.5 301v5M484.5 340v2M484.5 343v2M484.5 378v5M484.5 406v2M484.5 418v1M484.5 428v1M485.5 256v2M485.5 266v1M485.5 278v1M485.5 306v5M485.5 373v5M485.5 405v1M485.5 417v1M485.5 426v2M486.5 258v1M486.5 267v2M486.5 279v2M486.5 311v5M486.5 369v4M486.5 403v2M486.5 415v2M486.5 425v1M487.5 259v2M487.5 269v1M487.5 282v2M487.5 316v5M487.5 364v5M487.5 400v2M487.5 414v1M487.5 423v2M488.5 261v1M488.5 270v2M488.5 284v5M488.5 321v5M488.5 359v5M488.5 395v5M488.5 412v2M488.5 422v1M489.5 262v2M489.5 272v1M489.5 289v5M489.5 326v4M489.5 354v5M489.5 390v5M489.5 411v1M489.5 420v2M490.5 264v1M490.5 273v2M490.5 294v5M490.5 330v5M490.5 350v4M490.5 385v5M490.5 409v2M490.5 419v1M491.5 265v2M491.5 275v1M491.5 299v5M491.5 335v5M491.5 345v5M491.5 380v5M491.5 408v1M491.5 417v2M492.5 267v1M492.5 276v2M492.5 304v5M492.5 340v2M492.5 343v2M492.5 375v5M492.5 406v2M492.5 416v1M493.5 268v2M493.5 280v1M493.5 309v6M493.5 370v5M493.5 403v2M493.5 414v2M494.5 270v1M494.5 281v5M494.5 315v5M494.5 365v5M494.5 398v5M494.5 413v1M495.5 271v2M495.5 286v5M495.5 320v5M495.5 360v5M495.5 393v5M495.5 411v2M496.5 273v1M496.5 291v5M496.5 325v5M496.5 355v5M496.5 389v4M496.5 410v1M497.5 274v2M497.5 296v5M497.5 330v5M497.5 350v5M497.5 384v5M497.5 408v2M498.5 277v2M498.5 301v5M498.5 335v5M498.5 345v5M498.5 379v5M498.5 405v2M499.5 279v5M499.5 306v5M499.5 340v2M499.5 343v2M499.5 374v5M499.5 400v5M500.5 284v5M500.5 311v4M500.5 369v5M500.5 395v5M501.5 289v5M501.5 315v5M501.5 364v5M501.5 390v5M502.5 294v5M502.5 320v5M502.5 359v5M502.5 385v5M503.5 299v5M503.5 325v5M503.5 355v4M503.5 380v5M504.5 304v6M504.5 330v5M504.5 350v5M504.5 375v5M505.5 310v5M505.5 335v5M505.5 345v5M505.5 370v5M506.5 315v5M506.5 340v2M506.5 343v2M506.5 365v5M507.5 320v5M507.5 360v5M508.5 325v5M508.5 355v5M509.5 330v5M509.5 350v5M510.5 335v5M510.5 345v5M511.5 340v2M511.5 343v2" fill="none" stroke="#5a5a5a" stroke-width="1"/></svg>

<div id="cb">
 <div class="b1"></div><div class="b2"></div><div class="dr"></div><div class="db"></div>
 <div class="tt"></div><div class="ct"></div>
 <div class="title" style="left:6px;top:9px">Coordinate Box</div>
 <div class="cbx" style="left:6px;top:29px"></div><div class="lb" style="left:19px;top:31px">X</div>
 <div class="cbx" style="left:6px;top:50px"></div><div class="lb" style="left:19px;top:52px">Y</div>
 <div class="cbx" style="left:6px;top:71px"></div><div class="lb" style="left:19px;top:73px">Z</div>
 <div class="fd" style="left:33px;top:27px"><span>760.96 cm</span></div>
 <div class="fd" style="left:33px;top:48px"><span>543.71 cm</span></div>
 <div class="fd" style="left:33px;top:69px;background:#f0f0f0"><i></i><span>300 cm</span></div>
 <div class="lb" style="left:103px;top:31px">L</div>
 <div class="lb" style="left:103px;top:52px">A</div>
 <div class="fd" style="left:123px;top:27px;background:#c86464"><i></i><span>150</span></div>
 <div class="fd" style="left:123px;top:48px"><span>22.039</span></div>
</div>

<div id="dm">
 <div class="in"></div><div class="tt"></div><div class="tb"></div>
 <div class="title" style="left:5px;top:8px">Dome</div>
 <div id="act"></div>
 <div id="combo"><span>100</span><div class="btn"></div></div>
</div>
<svg width="786" height="572" viewBox="0 0 786 572" shape-rendering="crispEdges"><rect x="300" y="96" width="5" height="1" fill="#0a2a42"/><rect x="298" y="97" width="2" height="1" fill="#0a2a42"/><rect x="300" y="97" width="2" height="1" fill="#123e66"/><rect x="302" y="97" width="1" height="1" fill="#aacbe2"/><rect x="303" y="97" width="2" height="1" fill="#123e66"/><rect x="305" y="97" width="2" height="1" fill="#0a2a42"/><rect x="297" y="98" width="2" height="1" fill="#0a2a42"/><rect x="299" y="98" width="1" height="1" fill="#3f6f98"/><rect x="300" y="98" width="2" height="1" fill="#123e66"/><rect x="302" y="98" width="1" height="1" fill="#aacbe2"/><rect x="303" y="98" width="2" height="1" fill="#123e66"/><rect x="305" y="98" width="1" height="1" fill="#aacbe2"/><rect x="306" y="98" width="2" height="1" fill="#0a2a42"/><rect x="296" y="99" width="2" height="1" fill="#0a2a42"/><rect x="298" y="99" width="1" height="1" fill="#7a9fbe"/><rect x="299" y="99" width="1" height="1" fill="#3f6f98"/><rect x="300" y="99" width="2" height="1" fill="#123e66"/><rect x="302" y="99" width="1" height="1" fill="#aacbe2"/><rect x="303" y="99" width="2" height="1" fill="#123e66"/><rect x="305" y="99" width="1" height="1" fill="#7a9fbe"/><rect x="306" y="99" width="1" height="1" fill="#4a5a78"/><rect x="307" y="99" width="2" height="1" fill="#0a2a42"/><rect x="295" y="100" width="2" height="1" fill="#0a2a42"/><rect x="297" y="100" width="1" height="1" fill="#123e66"/><rect x="298" y="100" width="1" height="1" fill="#7a9fbe"/><rect x="299" y="100" width="1" height="1" fill="#3f6f98"/><rect x="300" y="100" width="1" height="1" fill="#123e66"/><rect x="301" y="100" width="1" height="1" fill="#8fb4cc"/><rect x="302" y="100" width="1" height="1" fill="#aacbe2"/><rect x="303" y="100" width="1" height="1" fill="#8fb4cc"/><rect x="304" y="100" width="1" height="1" fill="#123e66"/><rect x="305" y="100" width="1" height="1" fill="#aacbe2"/><rect x="306" y="100" width="1" height="1" fill="#b8d0ea"/><rect x="307" y="100" width="1" height="1" fill="#4a5a78"/><rect x="308" y="100" width="2" height="1" fill="#0a2a42"/><rect x="295" y="101" width="1" height="1" fill="#0a2a42"/><rect x="296" y="101" width="1" height="1" fill="#8fa8c0"/><rect x="297" y="101" width="1" height="1" fill="#123e66"/><rect x="298" y="101" width="1" height="1" fill="#7a9fbe"/><rect x="299" y="101" width="1" height="1" fill="#3f6f98"/><rect x="300" y="101" width="1" height="1" fill="#123e66"/><rect x="301" y="101" width="1" height="1" fill="#8fb4cc"/><rect x="302" y="101" width="1" height="1" fill="#aacbe2"/><rect x="303" y="101" width="1" height="1" fill="#8fb4cc"/><rect x="304" y="101" width="1" height="1" fill="#123e66"/><rect x="305" y="101" width="1" height="1" fill="#aacbe2"/><rect x="306" y="101" width="1" height="1" fill="#b8d0ea"/><rect x="307" y="101" width="1" height="1" fill="#4a5a78"/><rect x="308" y="101" width="1" height="1" fill="#b8d0ea"/><rect x="309" y="101" width="1" height="1" fill="#0a2a42"/><rect x="295" y="102" width="1" height="1" fill="#0a2a42"/><rect x="296" y="102" width="1" height="1" fill="#8fa8c0"/><rect x="297" y="102" width="1" height="1" fill="#123e66"/><rect x="298" y="102" width="1" height="1" fill="#7a9fbe"/><rect x="299" y="102" width="1" height="1" fill="#3f6f98"/><rect x="300" y="102" width="1" height="1" fill="#123e66"/><rect x="301" y="102" width="1" height="1" fill="#8fb4cc"/><rect x="302" y="102" width="1" height="1" fill="#aacbe2"/><rect x="303" y="102" width="1" height="1" fill="#8fb4cc"/><rect x="304" y="102" width="1" height="1" fill="#123e66"/><rect x="305" y="102" width="1" height="1" fill="#aacbe2"/><rect x="306" y="102" width="1" height="1" fill="#b8d0ea"/><rect x="307" y="102" width="1" height="1" fill="#4a5a78"/><rect x="308" y="102" width="2" height="1" fill="#b8d0ea"/><rect x="310" y="102" width="1" height="1" fill="#0a2a42"/><rect x="295" y="103" width="16" height="1" fill="#0a2a42"/><rect x="322" y="97" width="6" height="1" fill="#0a3258"/><rect x="320" y="98" width="4" height="1" fill="#0a3258"/><rect x="324" y="98" width="1" height="1" fill="#6a8fb8"/><rect x="325" y="98" width="5" height="1" fill="#0a3258"/><rect x="319" y="99" width="3" height="1" fill="#0a3258"/><rect x="322" y="99" width="1" height="1" fill="#6a8fb8"/><rect x="323" y="99" width="2" height="1" fill="#0a3258"/><rect x="325" y="99" width="1" height="1" fill="#6a8fb8"/><rect x="326" y="99" width="1" height="1" fill="#0a3258"/><rect x="327" y="99" width="1" height="1" fill="#f9b860"/><rect x="328" y="99" width="3" height="1" fill="#0a3258"/><rect x="319" y="100" width="2" height="1" fill="#0a3258"/><rect x="321" y="100" width="1" height="1" fill="#6a8fb8"/><rect x="322" y="100" width="2" height="1" fill="#0a3258"/><rect x="324" y="100" width="2" height="1" fill="#6a8fb8"/><rect x="326" y="100" width="1" height="1" fill="#0a3258"/><rect x="327" y="100" width="2" height="1" fill="#fde6a6"/><rect x="329" y="100" width="2" height="1" fill="#0a3258"/><rect x="318" y="101" width="9" height="1" fill="#0a3258"/><rect x="327" y="101" width="3" height="1" fill="#fde6a6"/><rect x="330" y="101" width="2" height="1" fill="#0a3258"/><rect x="318" y="102" width="2" height="1" fill="#0a3258"/><rect x="320" y="102" width="2" height="1" fill="#6a8fb8"/><rect x="322" y="102" width="1" height="1" fill="#0a3258"/><rect x="323" y="102" width="3" height="1" fill="#6a8fb8"/><rect x="326" y="102" width="1" height="1" fill="#0a3258"/><rect x="327" y="102" width="5" height="1" fill="#101010"/><rect x="319" y="103" width="4" height="1" fill="#0a3258"/><rect x="323" y="103" width="3" height="1" fill="#9ab8d8"/><rect x="326" y="103" width="1" height="1" fill="#0a3258"/><rect x="322" y="104" width="5" height="1" fill="#0a3258"/><rect x="344" y="98" width="6" height="1" fill="#46566a"/><rect x="342" y="99" width="2" height="1" fill="#46566a"/><rect x="344" y="99" width="4" height="1" fill="#a8c4e0"/><rect x="348" y="99" width="1" height="1" fill="#46566a"/><rect x="349" y="99" width="1" height="1" fill="#e4ecf6"/><rect x="350" y="99" width="3" height="1" fill="#46566a"/><rect x="341" y="100" width="1" height="1" fill="#46566a"/><rect x="342" y="100" width="3" height="1" fill="#a8c4e0"/><rect x="345" y="100" width="1" height="1" fill="#8aa8c8"/><rect x="346" y="100" width="2" height="1" fill="#a8c4e0"/><rect x="348" y="100" width="1" height="1" fill="#46566a"/><rect x="349" y="100" width="3" height="1" fill="#e4ecf6"/><rect x="352" y="100" width="1" height="1" fill="#46566a"/><rect x="340" y="101" width="1" height="1" fill="#0a4a94"/><rect x="341" y="101" width="1" height="1" fill="#46566a"/><rect x="342" y="101" width="1" height="1" fill="#a8c4e0"/><rect x="343" y="101" width="1" height="1" fill="#8aa8c8"/><rect x="344" y="101" width="2" height="1" fill="#a8c4e0"/><rect x="346" y="101" width="1" height="1" fill="#8aa8c8"/><rect x="347" y="101" width="1" height="1" fill="#a8c4e0"/><rect x="348" y="101" width="1" height="1" fill="#46566a"/><rect x="349" y="101" width="3" height="1" fill="#e4ecf6"/><rect x="352" y="101" width="1" height="1" fill="#46566a"/><rect x="339" y="102" width="3" height="1" fill="#0a4a94"/><rect x="342" y="102" width="2" height="1" fill="#a8c4e0"/><rect x="344" y="102" width="2" height="1" fill="#8aa8c8"/><rect x="346" y="102" width="2" height="1" fill="#a8c4e0"/><rect x="348" y="102" width="1" height="1" fill="#46566a"/><rect x="349" y="102" width="4" height="1" fill="#e4ecf6"/><rect x="353" y="102" width="1" height="1" fill="#0a4a94"/><rect x="340" y="103" width="1" height="1" fill="#0a4a94"/><rect x="341" y="103" width="1" height="1" fill="#46566a"/><rect x="342" y="103" width="1" height="1" fill="#a8c4e0"/><rect x="343" y="103" width="1" height="1" fill="#8aa8c8"/><rect x="344" y="103" width="2" height="1" fill="#a8c4e0"/><rect x="346" y="103" width="1" height="1" fill="#8aa8c8"/><rect x="347" y="103" width="1" height="1" fill="#a8c4e0"/><rect x="348" y="103" width="4" height="1" fill="#46566a"/><rect x="352" y="103" width="3" height="1" fill="#0a4a94"/><rect x="341" y="104" width="3" height="1" fill="#46566a"/><rect x="344" y="104" width="4" height="1" fill="#a8c4e0"/><rect x="348" y="104" width="1" height="1" fill="#46566a"/><rect x="349" y="104" width="1" height="1" fill="#0a4a94"/><rect x="353" y="104" width="1" height="1" fill="#0a4a94"/><rect x="344" y="105" width="4" height="1" fill="#46566a"/><rect x="348" y="105" width="3" height="1" fill="#0a4a94"/><rect x="349" y="106" width="1" height="1" fill="#0a4a94"/><rect x="366" y="96" width="5" height="1" fill="#0a2a42"/><rect x="364" y="97" width="2" height="1" fill="#0a2a42"/><rect x="366" y="97" width="2" height="1" fill="#123e66"/><rect x="368" y="97" width="1" height="1" fill="#aacbe2"/><rect x="369" y="97" width="2" height="1" fill="#123e66"/><rect x="371" y="97" width="2" height="1" fill="#0a2a42"/><rect x="363" y="98" width="2" height="1" fill="#0a2a42"/><rect x="365" y="98" width="1" height="1" fill="#3f6f98"/><rect x="366" y="98" width="2" height="1" fill="#123e66"/><rect x="368" y="98" width="1" height="1" fill="#aacbe2"/><rect x="369" y="98" width="2" height="1" fill="#123e66"/><rect x="371" y="98" width="1" height="1" fill="#aacbe2"/><rect x="372" y="98" width="2" height="1" fill="#0a2a42"/><rect x="362" y="99" width="2" height="1" fill="#0a2a42"/><rect x="364" y="99" width="1" height="1" fill="#7a9fbe"/><rect x="365" y="99" width="1" height="1" fill="#3f6f98"/><rect x="366" y="99" width="2" height="1" fill="#123e66"/><rect x="368" y="99" width="1" height="1" fill="#aacbe2"/><rect x="369" y="99" width="2" height="1" fill="#123e66"/><rect x="371" y="99" width="1" height="1" fill="#7a9fbe"/><rect x="372" y="99" width="1" height="1" fill="#4a5a78"/><rect x="373" y="99" width="2" height="1" fill="#0a2a42"/><rect x="361" y="100" width="2" height="1" fill="#0a2a42"/><rect x="363" y="100" width="1" height="1" fill="#123e66"/><rect x="364" y="100" width="1" height="1" fill="#7a9fbe"/><rect x="365" y="100" width="1" height="1" fill="#3f6f98"/><rect x="366" y="100" width="1" height="1" fill="#0a2a42"/><rect x="367" y="100" width="1" height="1" fill="#8fb4cc"/><rect x="368" y="100" width="1" height="1" fill="#aacbe2"/><rect x="369" y="100" width="1" height="1" fill="#8fb4cc"/><rect x="370" y="100" width="1" height="1" fill="#0a2a42"/><rect x="371" y="100" width="1" height="1" fill="#aacbe2"/><rect x="372" y="100" width="1" height="1" fill="#b8d0ea"/><rect x="373" y="100" width="1" height="1" fill="#4a5a78"/><rect x="374" y="100" width="2" height="1" fill="#0a2a42"/><rect x="361" y="101" width="1" height="1" fill="#0a2a42"/><rect x="362" y="101" width="1" height="1" fill="#8fa8c0"/><rect x="363" y="101" width="1" height="1" fill="#123e66"/><rect x="364" y="101" width="1" height="1" fill="#7a9fbe"/><rect x="365" y="101" width="1" height="1" fill="#3f6f98"/><rect x="366" y="101" width="1" height="1" fill="#0a2a42"/><rect x="367" y="101" width="1" height="1" fill="#8fb4cc"/><rect x="368" y="101" width="1" height="1" fill="#aacbe2"/><rect x="369" y="101" width="1" height="1" fill="#8fb4cc"/><rect x="370" y="101" width="1" height="1" fill="#0a2a42"/><rect x="371" y="101" width="1" height="1" fill="#aacbe2"/><rect x="372" y="101" width="1" height="1" fill="#b8d0ea"/><rect x="373" y="101" width="1" height="1" fill="#4a5a78"/><rect x="374" y="101" width="1" height="1" fill="#b8d0ea"/><rect x="375" y="101" width="1" height="1" fill="#0a2a42"/><rect x="361" y="102" width="1" height="1" fill="#0a2a42"/><rect x="362" y="102" width="3" height="1" fill="#b4e0f0"/><rect x="365" y="102" width="1" height="1" fill="#3f6f98"/><rect x="366" y="102" width="1" height="1" fill="#0a2a42"/><rect x="367" y="102" width="1" height="1" fill="#8fb4cc"/><rect x="368" y="102" width="1" height="1" fill="#aacbe2"/><rect x="369" y="102" width="1" height="1" fill="#8fb4cc"/><rect x="370" y="102" width="1" height="1" fill="#0a2a42"/><rect x="371" y="102" width="5" height="1" fill="#b4e0f0"/><rect x="376" y="102" width="1" height="1" fill="#0a2a42"/><rect x="361" y="103" width="5" height="1" fill="#ff0000"/><rect x="366" y="103" width="5" height="1" fill="#0a2a42"/><rect x="371" y="103" width="6" height="1" fill="#ff0000"/><rect x="213" y="35" width="2" height="1" fill="#737373"/><rect x="219" y="35" width="2" height="1" fill="#737373"/><rect x="214" y="36" width="2" height="1" fill="#737373"/><rect x="218" y="36" width="2" height="1" fill="#737373"/><rect x="215" y="37" width="4" height="1" fill="#737373"/><rect x="216" y="38" width="2" height="1" fill="#737373"/><rect x="215" y="39" width="4" height="1" fill="#737373"/><rect x="214" y="40" width="2" height="1" fill="#737373"/><rect x="218" y="40" width="2" height="1" fill="#737373"/><rect x="213" y="41" width="2" height="1" fill="#737373"/><rect x="219" y="41" width="2" height="1" fill="#737373"/><rect x="501" y="73" width="2" height="1" fill="#737373"/><rect x="507" y="73" width="2" height="1" fill="#737373"/><rect x="502" y="74" width="2" height="1" fill="#737373"/><rect x="506" y="74" width="2" height="1" fill="#737373"/><rect x="503" y="75" width="4" height="1" fill="#737373"/><rect x="504" y="76" width="2" height="1" fill="#737373"/><rect x="503" y="77" width="4" height="1" fill="#737373"/><rect x="502" y="78" width="2" height="1" fill="#737373"/><rect x="506" y="78" width="2" height="1" fill="#737373"/><rect x="501" y="79" width="2" height="1" fill="#737373"/><rect x="507" y="79" width="2" height="1" fill="#737373"/><rect x="478" y="98" width="5" height="1" fill="#686868"/><rect x="479" y="99" width="3" height="1" fill="#686868"/><rect x="480" y="100" width="1" height="1" fill="#686868"/><rect x="497" y="92" width="1" height="1" fill="#17173c"/><rect x="498" y="92" width="1" height="1" fill="#8a96b0"/><rect x="499" y="92" width="1" height="1" fill="#17173c"/><rect x="500" y="92" width="1" height="1" fill="#8a96b0"/><rect x="501" y="92" width="1" height="1" fill="#17173c"/><rect x="496" y="93" width="1" height="1" fill="#17173c"/><rect x="497" y="93" width="1" height="1" fill="#c0c8e0"/><rect x="498" y="93" width="1" height="1" fill="#5a8090"/><rect x="499" y="93" width="1" height="1" fill="#17173c"/><rect x="500" y="93" width="1" height="1" fill="#5a8090"/><rect x="501" y="93" width="1" height="1" fill="#c0c8e0"/><rect x="502" y="93" width="1" height="1" fill="#17173c"/><rect x="494" y="94" width="1" height="1" fill="#17173c"/><rect x="495" y="94" width="1" height="1" fill="#8a96b0"/><rect x="496" y="94" width="1" height="1" fill="#5a8090"/><rect x="497" y="94" width="1" height="1" fill="#17173c"/><rect x="498" y="94" width="1" height="1" fill="#c0c8e0"/><rect x="499" y="94" width="1" height="1" fill="#17173c"/><rect x="500" y="94" width="1" height="1" fill="#5a8090"/><rect x="501" y="94" width="1" height="1" fill="#c0c8e0"/><rect x="502" y="94" width="1" height="1" fill="#17173c"/><rect x="495" y="95" width="1" height="1" fill="#8a96b0"/><rect x="496" y="95" width="2" height="1" fill="#17173c"/><rect x="498" y="95" width="1" height="1" fill="#5a8090"/><rect x="499" y="95" width="2" height="1" fill="#17173c"/><rect x="501" y="95" width="1" height="1" fill="#c0c8e0"/><rect x="502" y="95" width="1" height="1" fill="#5a8090"/><rect x="503" y="95" width="1" height="1" fill="#17173c"/><rect x="493" y="96" width="1" height="1" fill="#17173c"/><rect x="494" y="96" width="1" height="1" fill="#c0c8e0"/><rect x="495" y="96" width="1" height="1" fill="#8a96b0"/><rect x="496" y="96" width="1" height="1" fill="#5a8090"/><rect x="497" y="96" width="3" height="1" fill="#17173c"/><rect x="500" y="96" width="1" height="1" fill="#5a8090"/><rect x="501" y="96" width="2" height="1" fill="#c0c8e0"/><rect x="503" y="96" width="1" height="1" fill="#17173c"/><rect x="493" y="97" width="1" height="1" fill="#17173c"/><rect x="494" y="97" width="1" height="1" fill="#c0c8e0"/><rect x="495" y="97" width="1" height="1" fill="#17173c"/><rect x="496" y="97" width="4" height="1" fill="#5a8090"/><rect x="500" y="97" width="1" height="1" fill="#17173c"/><rect x="501" y="97" width="2" height="1" fill="#c0c8e0"/><rect x="494" y="98" width="1" height="1" fill="#17173c"/><rect x="495" y="98" width="1" height="1" fill="#c0c8e0"/><rect x="496" y="98" width="2" height="1" fill="#c8c8e8"/><rect x="498" y="98" width="1" height="1" fill="#5a8090"/><rect x="499" y="98" width="1" height="1" fill="#17173c"/><rect x="493" y="99" width="1" height="1" fill="#17173c"/><rect x="494" y="99" width="1" height="1" fill="#5a8090"/><rect x="495" y="99" width="1" height="1" fill="#c0c8e0"/><rect x="496" y="99" width="1" height="1" fill="#17173c"/><rect x="497" y="99" width="2" height="1" fill="#c0c8e0"/><rect x="499" y="99" width="1" height="1" fill="#17173c"/><rect x="494" y="100" width="2" height="1" fill="#17173c"/><rect x="497" y="100" width="2" height="1" fill="#17173c"/><rect x="506" y="97" width="1" height="1" fill="#0c3012"/><rect x="500" y="98" width="1" height="1" fill="#34c078"/><rect x="503" y="98" width="1" height="1" fill="#98d0d0"/><rect x="504" y="98" width="1" height="1" fill="#0c3012"/><rect x="506" y="98" width="1" height="1" fill="#34c078"/><rect x="507" y="98" width="1" height="1" fill="#0c3012"/><rect x="499" y="99" width="1" height="1" fill="#0c3012"/><rect x="500" y="99" width="2" height="1" fill="#34c078"/><rect x="502" y="99" width="1" height="1" fill="#0c3012"/><rect x="503" y="99" width="1" height="1" fill="#98d0d0"/><rect x="504" y="99" width="1" height="1" fill="#0c3012"/><rect x="505" y="99" width="2" height="1" fill="#34c078"/><rect x="507" y="99" width="1" height="1" fill="#0c3012"/><rect x="499" y="100" width="1" height="1" fill="#0c3012"/><rect x="500" y="100" width="1" height="1" fill="#34c078"/><rect x="501" y="100" width="2" height="1" fill="#0c3012"/><rect x="503" y="100" width="1" height="1" fill="#98d0d0"/><rect x="504" y="100" width="2" height="1" fill="#0c3012"/><rect x="506" y="100" width="1" height="1" fill="#7ab0a0"/><rect x="507" y="100" width="2" height="1" fill="#0c3012"/><rect x="498" y="101" width="1" height="1" fill="#0c3012"/><rect x="499" y="101" width="2" height="1" fill="#34c078"/><rect x="501" y="101" width="1" height="1" fill="#98d0d0"/><rect x="502" y="101" width="3" height="1" fill="#0c3012"/><rect x="505" y="101" width="1" height="1" fill="#98d0d0"/><rect x="506" y="101" width="2" height="1" fill="#34c078"/><rect x="508" y="101" width="1" height="1" fill="#0c3012"/><rect x="498" y="102" width="1" height="1" fill="#0c3012"/><rect x="499" y="102" width="3" height="1" fill="#34c078"/><rect x="502" y="102" width="1" height="1" fill="#98d0d0"/><rect x="503" y="102" width="1" height="1" fill="#34c078"/><rect x="504" y="102" width="1" height="1" fill="#98d0d0"/><rect x="505" y="102" width="1" height="1" fill="#34c078"/><rect x="506" y="102" width="1" height="1" fill="#0c3012"/><rect x="507" y="102" width="1" height="1" fill="#34c078"/><rect x="508" y="102" width="1" height="1" fill="#0c3012"/><rect x="499" y="103" width="1" height="1" fill="#0c3012"/><rect x="500" y="103" width="1" height="1" fill="#34c078"/><rect x="501" y="103" width="1" height="1" fill="#0c3012"/><rect x="502" y="103" width="1" height="1" fill="#34c078"/><rect x="503" y="103" width="1" height="1" fill="#98d0d0"/><rect x="504" y="103" width="1" height="1" fill="#34c078"/><rect x="505" y="103" width="1" height="1" fill="#0c3012"/><rect x="506" y="103" width="2" height="1" fill="#34c078"/><rect x="508" y="103" width="1" height="1" fill="#0c3012"/><rect x="498" y="104" width="1" height="1" fill="#0c3012"/><rect x="499" y="104" width="2" height="1" fill="#34c078"/><rect x="501" y="104" width="2" height="1" fill="#0c3012"/><rect x="503" y="104" width="1" height="1" fill="#34c078"/><rect x="504" y="104" width="2" height="1" fill="#0c3012"/><rect x="506" y="104" width="2" height="1" fill="#34c078"/><rect x="508" y="104" width="1" height="1" fill="#0c3012"/><rect x="499" y="105" width="2" height="1" fill="#0c3012"/><rect x="502" y="105" width="1" height="1" fill="#0c3012"/><rect x="503" y="105" width="1" height="1" fill="#34c078"/><rect x="504" y="105" width="1" height="1" fill="#0c3012"/><rect x="506" y="105" width="2" height="1" fill="#0c3012"/><rect x="502" y="106" width="1" height="1" fill="#0c3012"/><rect x="503" y="106" width="1" height="1" fill="#34c078"/><rect x="504" y="106" width="1" height="1" fill="#0c3012"/></svg>
</body></html>
